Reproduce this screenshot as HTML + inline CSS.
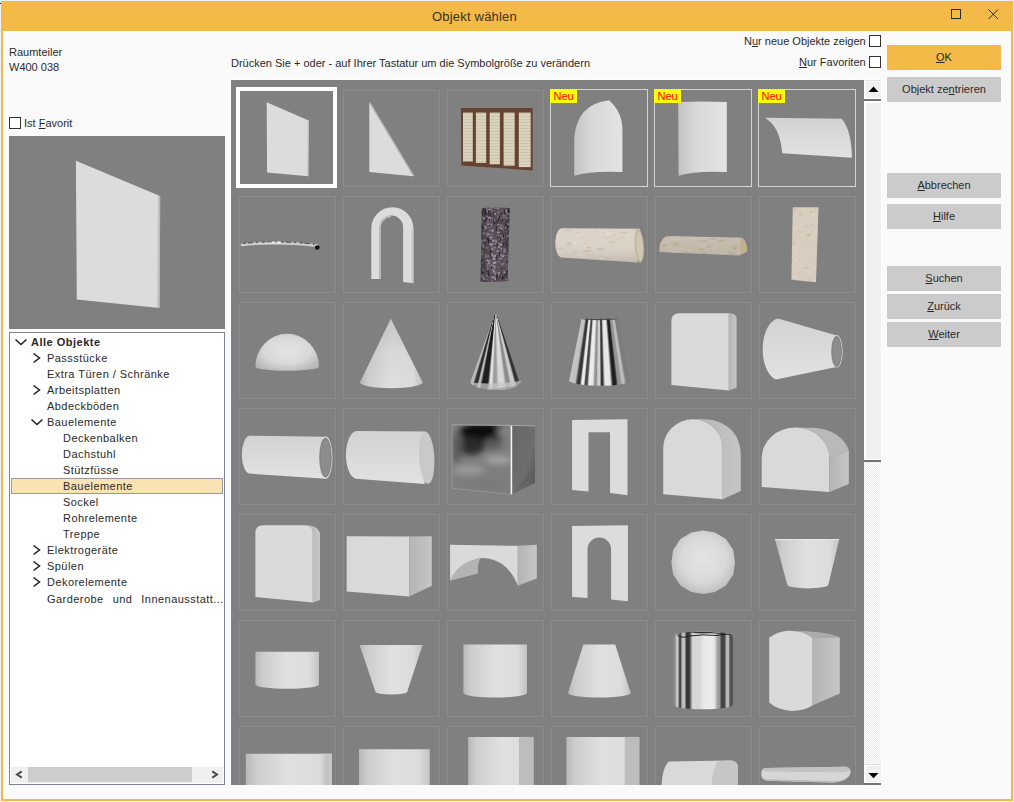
<!DOCTYPE html>
<html><head><meta charset="utf-8">
<style>
html,body{margin:0;padding:0;width:1014px;height:802px;overflow:hidden;background:#eef0f4;}
body{font-family:"Liberation Sans",sans-serif;font-size:11px;color:#2a2a2a;position:relative;}
.a{position:absolute;}
.t{position:absolute;white-space:nowrap;line-height:13px;}
#win{left:1px;top:1px;width:1012px;height:800px;background:#f3ba48;}
#cnt{left:3px;top:31px;width:1008px;height:768px;background:#fafafa;}
.btn{position:absolute;left:887px;width:114px;height:25px;background:#cbcbcb;text-align:center;line-height:25px;white-space:nowrap;}
.u{text-decoration:underline;text-underline-offset:1px;}
.cb{position:absolute;width:10px;height:10px;border:1px solid #333;background:#fff;}
.tr{position:absolute;white-space:nowrap;line-height:13px;letter-spacing:0.45px;}
.chev{position:absolute;}
</style></head><body>
<div id="win" class="a"></div>
<div id="cnt" class="a"></div>
<div id="px03" class="a" style="left:0;top:3px;width:1px;height:1px;background:#1a2030;"></div>
<!-- title bar -->
<div class="t" style="left:432px;top:9px;font-size:13px;line-height:15px;color:#3a3020;letter-spacing:0.2px;">Objekt wählen</div>
<svg class="a" style="left:940px;top:0px" width="70" height="30" viewBox="940 0 70 30">
  <rect x="951.5" y="9.5" width="9" height="9" fill="none" stroke="#2a2a2a" stroke-width="1"/>
  <path d="M988.5,9.5 L998,19 M998,9.5 L988.5,19" stroke="#2a2a2a" stroke-width="1" fill="none"/>
</svg>

<!-- left info -->
<div class="t" style="left:9px;top:46px;">Raumteiler</div>
<div class="t" style="left:9px;top:61px;">W400 038</div>
<div class="cb" style="left:9px;top:117px;"></div>
<div class="t" style="left:24px;top:117px;">Ist <span class="u">F</span>avorit</div>

<!-- preview -->
<div class="a" style="left:9px;top:136px;width:216px;height:193px;background:#808080;"></div>

<!-- tree -->
<div class="a" style="left:9px;top:332px;width:214px;height:451px;border:1px solid #7d8595;background:#fff;"></div>

<!-- treeitems -->
<div class="a" style="left:11px;top:478px;width:210px;height:14px;border:1px solid #999;background:#f9e3b3;"></div>
<div class="tr" style="left:31px;top:336px;font-weight:bold;letter-spacing:0.5px;">Alle Objekte</div>
<div class="tr" style="left:47px;top:352px;">Passstücke</div>
<div class="tr" style="left:47px;top:368px;">Extra Türen / Schränke</div>
<div class="tr" style="left:47px;top:384px;">Arbeitsplatten</div>
<div class="tr" style="left:47px;top:400px;">Abdeckböden</div>
<div class="tr" style="left:47px;top:416px;">Bauelemente</div>
<div class="tr" style="left:63px;top:432px;">Deckenbalken</div>
<div class="tr" style="left:63px;top:448px;">Dachstuhl</div>
<div class="tr" style="left:63px;top:464px;">Stützfüsse</div>
<div class="tr" style="left:63px;top:480px;">Bauelemente</div>
<div class="tr" style="left:63px;top:496px;">Sockel</div>
<div class="tr" style="left:63px;top:512px;">Rohrelemente</div>
<div class="tr" style="left:63px;top:528px;">Treppe</div>
<div class="tr" style="left:47px;top:544px;">Elektrogeräte</div>
<div class="tr" style="left:47px;top:560px;">Spülen</div>
<div class="tr" style="left:47px;top:576px;">Dekorelemente</div>
<div class="tr" style="left:47px;top:593px;word-spacing:5.5px;">Garderobe und Innenausstatt...</div>
<svg class="a" style="left:0;top:330px" width="60" height="280" viewBox="0 330 60 280"><path d="M15.5,339.5 L21,344.5 L26.5,339.5 M33.5,353.5 L39.5,358.0 L33.5,362.5 M33.5,385.5 L39.5,390.0 L33.5,394.5 M31.5,419.5 L37,424.5 L42.5,419.5 M33.5,545.5 L39.5,550.0 L33.5,554.5 M33.5,561.5 L39.5,566.0 L33.5,570.5 M33.5,577.5 L39.5,582.0 L33.5,586.5" fill="none" stroke="#1e1e1e" stroke-width="1.5"/></svg>
<!-- top texts -->
<div class="t" style="left:231px;top:57px;">Drücken Sie + oder - auf Ihrer Tastatur um die Symbolgröße zu verändern</div>
<div class="t" style="left:744px;top:35px;">N<span class="u">u</span>r neue Objekte zeigen</div>
<div class="cb" style="left:869px;top:35px;"></div>
<div class="t" style="left:799px;top:56px;"><span class="u">N</span>ur Favoriten</div>
<div class="cb" style="left:869px;top:56px;"></div>

<!-- buttons -->
<div class="btn" style="top:45px;background:#f3ba48;"><span class="u">O</span>K</div>
<div class="btn" style="top:77px;">Objekt ze<span class="u">n</span>trieren</div>
<div class="btn" style="top:173px;"><span class="u">A</span>bbrechen</div>
<div class="btn" style="top:204px;"><span class="u">H</span>ilfe</div>
<div class="btn" style="top:266px;"><span class="u">S</span>uchen</div>
<div class="btn" style="top:294px;"><span class="u">Z</span>urück</div>
<div class="btn" style="top:322px;"><span class="u">W</span>eiter</div>

<!-- grid -->
<div class="a" style="left:230px;top:79px;width:652px;height:706px;background:#fff;"></div>
<div class="a" style="left:231px;top:80px;width:633px;height:705px;background:#808080;"></div>
<!-- tree hscroll -->
<div class="a" style="left:11px;top:767px;width:212px;height:16px;background:#f0f0f0;"></div>
<div class="a" style="left:28px;top:767px;width:164px;height:15px;background:#cdcdcd;"></div>
<svg class="a" style="left:0;top:760px" width="230" height="30" viewBox="0 760 230 30"><path d="M21.8,771.3 L17,774.5 L21.8,777.7 M212.2,771.3 L217,774.5 L212.2,777.7" fill="none" stroke="#4a4a4a" stroke-width="2"/></svg>
<!-- grid vscroll -->
<div class="a" style="left:864px;top:80px;width:17px;height:705px;background:#fff;"></div>
<div class="a" style="left:865px;top:80px;width:16px;height:1px;background:#e2e2e2;"></div>
<div class="a" style="left:866px;top:82px;width:15px;height:16px;background:#f0f0f0;"></div>
<div class="a" style="left:864px;top:99px;width:17px;height:2px;background:#737373;"></div>
<div class="a" style="left:866px;top:103px;width:15px;height:356px;background:#f0f0f0;"></div>
<div class="a" style="left:864px;top:460px;width:17px;height:2px;background:#737373;"></div>
<div class="a" style="left:864px;top:462px;width:17px;height:302px;background-color:#fff;background-image:repeating-conic-gradient(#ebebeb 0 25%, #ffffff 0 50%);background-size:2px 2px;"></div>
<div class="a" style="left:864px;top:764px;width:17px;height:1px;background:#e2e2e2;"></div>
<div class="a" style="left:866px;top:766px;width:15px;height:16px;background:#f0f0f0;"></div>
<div class="a" style="left:864px;top:783px;width:17px;height:2px;background:#737373;"></div>
<svg class="a" style="left:860px;top:76px" width="26" height="714" viewBox="860 76 26 714"><path d="M873.5,86.5 L878.5,92 L868.5,92 Z M868.5,773 L878.5,773 L873.5,778.3 Z" fill="#000"/></svg>
<!-- GRIDSVG -->
<svg class="a" style="left:231px;top:80px" width="633" height="705" viewBox="231 80 633 705"><defs>
<linearGradient id="gH" x1="0" x2="1" y1="0" y2="0">
 <stop offset="0" stop-color="#b9b9b9"/><stop offset="0.12" stop-color="#cdcdcd"/><stop offset="0.5" stop-color="#e0e0e0"/><stop offset="0.85" stop-color="#dcdcdc"/><stop offset="1" stop-color="#c2c2c2"/>
</linearGradient>
<linearGradient id="gPanel" x1="0" x2="1" y1="0" y2="0">
 <stop offset="0" stop-color="#c2c2c2"/><stop offset="0.35" stop-color="#d8d8d8"/><stop offset="1" stop-color="#e3e3e3"/>
</linearGradient>
<linearGradient id="gPanelV" x1="0" x2="0" y1="0" y2="1">
 <stop offset="0" stop-color="#d2d2d2"/><stop offset="1" stop-color="#e2e2e2"/>
</linearGradient>
<radialGradient id="gSph" cx="0.5" cy="0.45" r="0.6">
 <stop offset="0" stop-color="#e4e4e4"/><stop offset="0.6" stop-color="#d9d9d9"/><stop offset="1" stop-color="#b8b8b8"/>
</radialGradient>
<linearGradient id="gSide" x1="0" x2="1" y1="0" y2="0">
 <stop offset="0" stop-color="#b4b4b4"/><stop offset="1" stop-color="#c6c6c6"/>
</linearGradient>
<linearGradient id="gChrome" x1="0" x2="1" y1="0" y2="0">
 <stop offset="0" stop-color="#9a9a9a"/><stop offset="0.06" stop-color="#e8e8e8"/><stop offset="0.12" stop-color="#505050"/><stop offset="0.17" stop-color="#1a1a1a"/><stop offset="0.24" stop-color="#d0d0d0"/><stop offset="0.32" stop-color="#ffffff"/><stop offset="0.4" stop-color="#9a9a9a"/><stop offset="0.46" stop-color="#f4f4f4"/><stop offset="0.55" stop-color="#c8c8c8"/><stop offset="0.62" stop-color="#ffffff"/><stop offset="0.7" stop-color="#707070"/><stop offset="0.78" stop-color="#1e1e1e"/><stop offset="0.86" stop-color="#bdbdbd"/><stop offset="0.93" stop-color="#303030"/><stop offset="1" stop-color="#8a8a8a"/>
</linearGradient>
<linearGradient id="gChrome2" x1="0" x2="1" y1="0" y2="0">
 <stop offset="0" stop-color="#a0a0a0"/><stop offset="0.05" stop-color="#f0f0f0"/><stop offset="0.1" stop-color="#3a3a3a"/><stop offset="0.16" stop-color="#d8d8d8"/><stop offset="0.22" stop-color="#7a7a7a"/><stop offset="0.3" stop-color="#ffffff"/><stop offset="0.38" stop-color="#c0c0c0"/><stop offset="0.45" stop-color="#ffffff"/><stop offset="0.55" stop-color="#f0f0f0"/><stop offset="0.62" stop-color="#6a6a6a"/><stop offset="0.7" stop-color="#e6e6e6"/><stop offset="0.76" stop-color="#2a2a2a"/><stop offset="0.84" stop-color="#cfcfcf"/><stop offset="0.92" stop-color="#404040"/><stop offset="1" stop-color="#9a9a9a"/>
</linearGradient>
<linearGradient id="gCube" x1="0" x2="0.3" y1="0" y2="1">
 <stop offset="0" stop-color="#505050"/><stop offset="0.35" stop-color="#5a5a5a"/><stop offset="0.6" stop-color="#8a8a8a"/><stop offset="1" stop-color="#9a9a9a"/>
</linearGradient>
<linearGradient id="gWood" x1="0" x2="0" y1="0" y2="1">
 <stop offset="0" stop-color="#d8ccb6"/><stop offset="1" stop-color="#c9bba4"/>
</linearGradient>
<pattern id="pWeave" width="4" height="3" patternUnits="userSpaceOnUse"><rect width="4" height="3" fill="#d9d2bf"/><rect y="2" width="4" height="1" fill="#cdc4ae"/></pattern>
<pattern id="pBark" width="8" height="8" patternUnits="userSpaceOnUse"><rect width="8" height="8" fill="#4a3f47"/><path d="M1,0 L2,4 L1,8 M5,1 L6,5 L5,7" stroke="#8a7f8a" stroke-width="1.1" fill="none"/><rect x="3" y="2" width="1" height="2" fill="#9c93a0"/></pattern>
<radialGradient id="gCubeR" cx="0.45" cy="0.12" r="0.55"><stop offset="0" stop-color="#000" stop-opacity="0.85"/><stop offset="0.6" stop-color="#000" stop-opacity="0.35"/><stop offset="1" stop-color="#000" stop-opacity="0"/></radialGradient>
<linearGradient id="gCubeS" x1="0" x2="1" y1="0" y2="1"><stop offset="0" stop-color="#666666"/><stop offset="0.6" stop-color="#6e6e6e"/><stop offset="1" stop-color="#555555"/></linearGradient>
<linearGradient id="gBarkShade" x1="0" x2="1" y1="0" y2="0"><stop offset="0" stop-color="#000" stop-opacity="0.45"/><stop offset="0.35" stop-color="#000" stop-opacity="0"/><stop offset="0.7" stop-color="#000" stop-opacity="0"/><stop offset="1" stop-color="#000" stop-opacity="0.45"/></linearGradient>
<linearGradient id="gLogShade" x1="0" x2="0" y1="0" y2="1"><stop offset="0" stop-color="#fff" stop-opacity="0.1"/><stop offset="0.5" stop-color="#fff" stop-opacity="0.05"/><stop offset="1" stop-color="#000" stop-opacity="0.18"/></linearGradient>
<linearGradient id="gHlShade" x1="0" x2="0" y1="0" y2="1"><stop offset="0" stop-color="#000" stop-opacity="0.05"/><stop offset="1" stop-color="#000" stop-opacity="0.12"/></linearGradient>
<filter id="fBlur" x="-10%" y="-10%" width="120%" height="120%"><feGaussianBlur stdDeviation="0.55"/></filter>
<filter id="fTex" x="-5%" y="-5%" width="110%" height="110%"><feGaussianBlur stdDeviation="0.6"/></filter>
<filter id="fCube" x="-30%" y="-30%" width="160%" height="160%"><feGaussianBlur stdDeviation="3"/></filter>
<filter id="fTex2" x="-5%" y="-5%" width="110%" height="110%"><feGaussianBlur stdDeviation="0.35"/></filter>
<linearGradient id="gConeV" x1="0" x2="0" y1="0" y2="1"><stop offset="0" stop-color="#000" stop-opacity="0.12"/><stop offset="0.5" stop-color="#000" stop-opacity="0.03"/><stop offset="1" stop-color="#000" stop-opacity="0"/></linearGradient>
<linearGradient id="gSideR" x1="0" x2="1" y1="0" y2="0"><stop offset="0" stop-color="#d8d8d8"/><stop offset="0.5" stop-color="#c2c2c2"/><stop offset="1" stop-color="#c8c8c8"/></linearGradient>
</defs><rect x="343.5" y="90.5" width="96" height="96" fill="none" stroke="#8b8b8b" stroke-width="1"/><rect x="447.5" y="90.5" width="96" height="96" fill="none" stroke="#8b8b8b" stroke-width="1"/><rect x="550.5" y="89.5" width="97" height="97" fill="none" stroke="#d2d2d2" stroke-width="1"/><rect x="654.5" y="89.5" width="97" height="97" fill="none" stroke="#d2d2d2" stroke-width="1"/><rect x="758.5" y="89.5" width="97" height="97" fill="none" stroke="#d2d2d2" stroke-width="1"/><rect x="239.5" y="196.5" width="96" height="96" fill="none" stroke="#8b8b8b" stroke-width="1"/><rect x="343.5" y="196.5" width="96" height="96" fill="none" stroke="#8b8b8b" stroke-width="1"/><rect x="447.5" y="196.5" width="96" height="96" fill="none" stroke="#8b8b8b" stroke-width="1"/><rect x="551.5" y="196.5" width="96" height="96" fill="none" stroke="#8b8b8b" stroke-width="1"/><rect x="655.5" y="196.5" width="96" height="96" fill="none" stroke="#8b8b8b" stroke-width="1"/><rect x="759.5" y="196.5" width="96" height="96" fill="none" stroke="#8b8b8b" stroke-width="1"/><rect x="239.5" y="302.5" width="96" height="96" fill="none" stroke="#8b8b8b" stroke-width="1"/><rect x="343.5" y="302.5" width="96" height="96" fill="none" stroke="#8b8b8b" stroke-width="1"/><rect x="447.5" y="302.5" width="96" height="96" fill="none" stroke="#8b8b8b" stroke-width="1"/><rect x="551.5" y="302.5" width="96" height="96" fill="none" stroke="#8b8b8b" stroke-width="1"/><rect x="655.5" y="302.5" width="96" height="96" fill="none" stroke="#8b8b8b" stroke-width="1"/><rect x="759.5" y="302.5" width="96" height="96" fill="none" stroke="#8b8b8b" stroke-width="1"/><rect x="239.5" y="408.5" width="96" height="96" fill="none" stroke="#8b8b8b" stroke-width="1"/><rect x="343.5" y="408.5" width="96" height="96" fill="none" stroke="#8b8b8b" stroke-width="1"/><rect x="447.5" y="408.5" width="96" height="96" fill="none" stroke="#8b8b8b" stroke-width="1"/><rect x="551.5" y="408.5" width="96" height="96" fill="none" stroke="#8b8b8b" stroke-width="1"/><rect x="655.5" y="408.5" width="96" height="96" fill="none" stroke="#8b8b8b" stroke-width="1"/><rect x="759.5" y="408.5" width="96" height="96" fill="none" stroke="#8b8b8b" stroke-width="1"/><rect x="239.5" y="514.5" width="96" height="96" fill="none" stroke="#8b8b8b" stroke-width="1"/><rect x="343.5" y="514.5" width="96" height="96" fill="none" stroke="#8b8b8b" stroke-width="1"/><rect x="447.5" y="514.5" width="96" height="96" fill="none" stroke="#8b8b8b" stroke-width="1"/><rect x="551.5" y="514.5" width="96" height="96" fill="none" stroke="#8b8b8b" stroke-width="1"/><rect x="655.5" y="514.5" width="96" height="96" fill="none" stroke="#8b8b8b" stroke-width="1"/><rect x="759.5" y="514.5" width="96" height="96" fill="none" stroke="#8b8b8b" stroke-width="1"/><rect x="239.5" y="620.5" width="96" height="96" fill="none" stroke="#8b8b8b" stroke-width="1"/><rect x="343.5" y="620.5" width="96" height="96" fill="none" stroke="#8b8b8b" stroke-width="1"/><rect x="447.5" y="620.5" width="96" height="96" fill="none" stroke="#8b8b8b" stroke-width="1"/><rect x="551.5" y="620.5" width="96" height="96" fill="none" stroke="#8b8b8b" stroke-width="1"/><rect x="655.5" y="620.5" width="96" height="96" fill="none" stroke="#8b8b8b" stroke-width="1"/><rect x="759.5" y="620.5" width="96" height="96" fill="none" stroke="#8b8b8b" stroke-width="1"/><rect x="239.5" y="726.5" width="96" height="96" fill="none" stroke="#8b8b8b" stroke-width="1"/><rect x="343.5" y="726.5" width="96" height="96" fill="none" stroke="#8b8b8b" stroke-width="1"/><rect x="447.5" y="726.5" width="96" height="96" fill="none" stroke="#8b8b8b" stroke-width="1"/><rect x="551.5" y="726.5" width="96" height="96" fill="none" stroke="#8b8b8b" stroke-width="1"/><rect x="655.5" y="726.5" width="96" height="96" fill="none" stroke="#8b8b8b" stroke-width="1"/><rect x="759.5" y="726.5" width="96" height="96" fill="none" stroke="#8b8b8b" stroke-width="1"/><g transform="translate(239,90)"><path d="M27.7,12.3 L69.7,30.4 L69.3,86.2 L28.1,82.5 Z" fill="#dcdcdc"/><path d="M68.6,30.2 L69.7,30.4 L69.3,86.2 L68.3,86.1 Z" fill="#c4c4c4"/></g><g transform="translate(343,90)"><path d="M26.3,12.7 L70.4,86.2 L26.3,82 Z" fill="#dcdcdc"/><path d="M26.3,12.7 L27.3,12.2 L71.4,86 L70.4,86.2 Z" fill="#bdbdbd"/></g><g transform="translate(447,90)"><path d="M13.9,18 L85.7,18 L85.7,80.4 L14.4,75.5 Z" fill="#654330"/><rect x="16" y="22.6" width="9.8" height="48.9" fill="url(#pWeave)"/><rect x="28.9" y="22.6" width="10.3" height="50.3" fill="url(#pWeave)"/><rect x="42.7" y="22.6" width="10.2" height="51.7" fill="url(#pWeave)"/><rect x="56.6" y="22.6" width="11.1" height="53.1" fill="url(#pWeave)"/><rect x="71.8" y="22.6" width="11.9" height="54.5" fill="url(#pWeave)"/></g><g transform="translate(551,90)"><path d="M23.2,85.7 L23.2,48 Q26,14 58,10.3 Q71.4,22 71.4,40 L71.4,82 Q40,80.5 23.2,85.7 Z" fill="url(#gPanel)"/></g><g transform="translate(655,90)"><path d="M23.2,11.9 Q48,11 71.8,11.9 L71.8,82 Q40,80.5 23.6,85.7 Z" fill="url(#gPanel)"/></g><g transform="translate(759,90)"><path d="M5.7,27.7 L82.7,28.7 Q92.5,40 92.9,67.7 L23.2,63.2 Q21,36 5.7,27.7 Z" fill="url(#gPanelV)"/></g><g transform="translate(239,196)"><path d="M3.1,48.8 Q35,45 77.5,49.5" stroke="#cdcdcd" stroke-width="2.8" fill="none" stroke-linecap="round"/><path d="M28,46.8 Q35,46.2 42,46.4" stroke="#f4f4f4" stroke-width="1.6" fill="none"/><path d="M4,47.6 Q35,43.9 76,48.3" stroke="#3c3c3c" stroke-width="0.9" fill="none" stroke-dasharray="3 2 5 3 2 4"/><path d="M76,50 L80.5,50.5 L80,53 L77,53.5 Z" fill="#111"/><circle cx="78.3" cy="51.4" r="2.2" fill="#111"/></g><g transform="translate(343,196)"><path d="M28.3,83 L28.3,32.3 A21,21 0 0 1 70.4,32.3 L70.4,87.2 L60.1,86 L60.1,31.3 A11.8,11.8 0 0 0 36.5,31.3 L36.5,83 Z" fill="#dcdcdc"/><path d="M36.5,83 L36.5,31.3 A11.8,11.8 0 0 1 48,19.5 L48,21 A10.5,10.5 0 0 0 37.8,31.5 L37.8,83 Z" fill="#c4c4c4"/><path d="M70.4,32.3 L70.4,87.2 L68.5,87 L68.5,33 Z" fill="#c8c8c8"/></g><g transform="translate(447,196)"><clipPath id="cpBark"><path d="M34.8,12.2 Q48.8,10.3 62.8,12.2 L60.6,85 Q47,86.8 33.6,85.5 Z"/></clipPath><g clip-path="url(#cpBark)"><rect x="30" y="8" width="36" height="82" fill="#5a4f58"/><g filter="url(#fTex2)"><ellipse cx="42.0" cy="21.8" rx="1.25" ry="0.56" fill="#6e646e"/><ellipse cx="34.9" cy="55.5" rx="1.51" ry="0.67" fill="#8d8290"/><ellipse cx="45.4" cy="15.4" rx="0.69" ry="0.84" fill="#6e646e"/><ellipse cx="35.8" cy="27.4" rx="1.23" ry="1.26" fill="#6e646e"/><ellipse cx="50.2" cy="13.9" rx="0.82" ry="0.95" fill="#9a90a0"/><ellipse cx="41.0" cy="21.3" rx="0.72" ry="0.75" fill="#9a90a0"/><ellipse cx="35.2" cy="54.6" rx="0.79" ry="0.58" fill="#8d8290"/><ellipse cx="49.5" cy="58.3" rx="1.10" ry="0.93" fill="#7e7480"/><ellipse cx="46.4" cy="82.0" rx="0.96" ry="0.70" fill="#9a90a0"/><ellipse cx="53.7" cy="29.0" rx="1.17" ry="0.92" fill="#7e7480"/><ellipse cx="54.6" cy="32.5" rx="1.58" ry="0.59" fill="#a59cab"/><ellipse cx="37.1" cy="36.7" rx="1.53" ry="0.84" fill="#8d8290"/><ellipse cx="55.7" cy="54.7" rx="1.48" ry="0.75" fill="#7e7480"/><ellipse cx="50.4" cy="55.2" rx="1.06" ry="1.17" fill="#7e7480"/><ellipse cx="46.7" cy="61.8" rx="0.66" ry="1.06" fill="#6e646e"/><ellipse cx="62.8" cy="74.1" rx="0.88" ry="0.81" fill="#7e7480"/><ellipse cx="32.7" cy="46.0" rx="0.77" ry="0.59" fill="#8d8290"/><ellipse cx="38.8" cy="32.4" rx="1.34" ry="0.82" fill="#a59cab"/><ellipse cx="34.5" cy="45.0" rx="1.15" ry="1.21" fill="#a59cab"/><ellipse cx="58.8" cy="31.7" rx="1.02" ry="0.79" fill="#a59cab"/><ellipse cx="61.7" cy="21.8" rx="0.78" ry="0.69" fill="#9a90a0"/><ellipse cx="32.4" cy="74.8" rx="0.78" ry="0.73" fill="#9a90a0"/><ellipse cx="45.0" cy="38.8" rx="1.17" ry="1.26" fill="#6e646e"/><ellipse cx="61.5" cy="61.1" rx="1.34" ry="0.87" fill="#6e646e"/><ellipse cx="44.2" cy="41.1" rx="0.70" ry="1.01" fill="#8d8290"/><ellipse cx="37.9" cy="86.8" rx="1.04" ry="0.59" fill="#6e646e"/><ellipse cx="33.6" cy="10.0" rx="0.75" ry="0.58" fill="#7e7480"/><ellipse cx="51.0" cy="15.5" rx="0.81" ry="0.80" fill="#7e7480"/><ellipse cx="61.6" cy="57.0" rx="1.07" ry="0.59" fill="#a59cab"/><ellipse cx="62.8" cy="46.3" rx="1.08" ry="0.57" fill="#8d8290"/><ellipse cx="55.2" cy="67.7" rx="1.08" ry="1.05" fill="#6e646e"/><ellipse cx="32.7" cy="84.2" rx="1.13" ry="0.62" fill="#6e646e"/><ellipse cx="60.3" cy="69.1" rx="0.90" ry="1.01" fill="#8d8290"/><ellipse cx="53.6" cy="30.4" rx="0.97" ry="0.63" fill="#9a90a0"/><ellipse cx="48.5" cy="70.8" rx="0.93" ry="0.68" fill="#9a90a0"/><ellipse cx="57.0" cy="73.8" rx="1.34" ry="0.68" fill="#6e646e"/><ellipse cx="47.3" cy="67.0" rx="1.59" ry="1.13" fill="#a59cab"/><ellipse cx="40.0" cy="64.0" rx="1.56" ry="0.86" fill="#7e7480"/><ellipse cx="61.6" cy="38.4" rx="0.82" ry="0.68" fill="#9a90a0"/><ellipse cx="42.5" cy="47.6" rx="1.59" ry="0.99" fill="#8d8290"/><ellipse cx="46.9" cy="60.9" rx="1.40" ry="0.57" fill="#8d8290"/><ellipse cx="60.2" cy="71.0" rx="1.35" ry="0.88" fill="#9a90a0"/><ellipse cx="45.5" cy="59.6" rx="0.69" ry="1.26" fill="#a59cab"/><ellipse cx="46.4" cy="68.0" rx="0.68" ry="0.63" fill="#9a90a0"/><ellipse cx="32.9" cy="56.1" rx="1.07" ry="1.02" fill="#6e646e"/><ellipse cx="57.6" cy="86.5" rx="1.26" ry="0.78" fill="#6e646e"/><ellipse cx="49.0" cy="11.7" rx="1.40" ry="1.08" fill="#8d8290"/><ellipse cx="48.3" cy="82.8" rx="1.03" ry="1.20" fill="#9a90a0"/><ellipse cx="32.9" cy="26.6" rx="1.10" ry="1.11" fill="#7e7480"/><ellipse cx="40.0" cy="42.7" rx="0.73" ry="1.23" fill="#7e7480"/><ellipse cx="59.8" cy="61.7" rx="1.42" ry="0.91" fill="#6e646e"/><ellipse cx="36.1" cy="21.8" rx="1.11" ry="1.20" fill="#9a90a0"/><ellipse cx="50.9" cy="70.5" rx="0.75" ry="0.61" fill="#6e646e"/><ellipse cx="54.5" cy="53.4" rx="0.93" ry="0.91" fill="#6e646e"/><ellipse cx="47.0" cy="70.6" rx="1.48" ry="0.55" fill="#9a90a0"/><ellipse cx="40.6" cy="70.2" rx="1.11" ry="0.95" fill="#8d8290"/><ellipse cx="45.7" cy="57.8" rx="1.11" ry="0.91" fill="#7e7480"/><ellipse cx="46.0" cy="51.6" rx="1.08" ry="1.25" fill="#6e646e"/><ellipse cx="59.2" cy="83.5" rx="0.86" ry="0.95" fill="#9a90a0"/><ellipse cx="58.0" cy="20.7" rx="0.72" ry="0.85" fill="#8d8290"/><ellipse cx="52.8" cy="43.4" rx="0.81" ry="0.74" fill="#8d8290"/><ellipse cx="59.8" cy="22.0" rx="1.32" ry="1.03" fill="#9a90a0"/><ellipse cx="39.8" cy="20.7" rx="1.07" ry="1.10" fill="#8d8290"/><ellipse cx="44.3" cy="48.0" rx="1.59" ry="1.17" fill="#9a90a0"/><ellipse cx="53.9" cy="87.5" rx="1.00" ry="0.84" fill="#7e7480"/><ellipse cx="41.9" cy="66.3" rx="0.62" ry="0.94" fill="#a59cab"/><ellipse cx="53.8" cy="40.0" rx="1.12" ry="0.74" fill="#8d8290"/><ellipse cx="35.5" cy="81.6" rx="0.83" ry="1.20" fill="#8d8290"/><ellipse cx="40.2" cy="13.1" rx="1.38" ry="0.72" fill="#9a90a0"/><ellipse cx="57.4" cy="76.3" rx="1.28" ry="1.26" fill="#a59cab"/><ellipse cx="36.6" cy="81.7" rx="1.17" ry="1.06" fill="#8d8290"/><ellipse cx="40.7" cy="72.4" rx="0.78" ry="1.22" fill="#7e7480"/><ellipse cx="61.1" cy="59.5" rx="1.40" ry="0.57" fill="#9a90a0"/><ellipse cx="34.1" cy="77.3" rx="1.05" ry="0.77" fill="#6e646e"/><ellipse cx="45.0" cy="81.4" rx="1.22" ry="0.53" fill="#9a90a0"/><ellipse cx="61.1" cy="85.6" rx="0.86" ry="0.64" fill="#7e7480"/><ellipse cx="51.5" cy="51.4" rx="0.81" ry="0.86" fill="#9a90a0"/><ellipse cx="40.4" cy="72.7" rx="1.59" ry="0.53" fill="#8d8290"/><ellipse cx="54.7" cy="53.0" rx="0.79" ry="0.88" fill="#a59cab"/><ellipse cx="35.3" cy="73.9" rx="1.03" ry="0.90" fill="#a59cab"/><ellipse cx="62.1" cy="34.0" rx="0.82" ry="0.68" fill="#9a90a0"/><ellipse cx="57.8" cy="65.1" rx="1.24" ry="0.82" fill="#7e7480"/><ellipse cx="62.4" cy="75.3" rx="0.61" ry="1.00" fill="#7e7480"/><ellipse cx="45.4" cy="14.3" rx="1.27" ry="0.80" fill="#6e646e"/><ellipse cx="52.8" cy="32.0" rx="0.84" ry="0.73" fill="#a59cab"/><ellipse cx="37.7" cy="31.0" rx="0.60" ry="0.79" fill="#7e7480"/><ellipse cx="62.2" cy="52.7" rx="0.84" ry="1.27" fill="#7e7480"/><ellipse cx="38.8" cy="24.3" rx="0.94" ry="0.57" fill="#7e7480"/><ellipse cx="47.6" cy="25.7" rx="1.10" ry="0.50" fill="#7e7480"/><ellipse cx="57.3" cy="21.2" rx="1.19" ry="0.82" fill="#7e7480"/><ellipse cx="41.4" cy="28.2" rx="1.19" ry="0.92" fill="#9a90a0"/><ellipse cx="52.4" cy="65.8" rx="1.48" ry="0.81" fill="#7e7480"/><ellipse cx="54.3" cy="48.5" rx="0.88" ry="0.99" fill="#9a90a0"/><ellipse cx="33.4" cy="75.2" rx="1.49" ry="1.00" fill="#6e646e"/><ellipse cx="36.3" cy="50.9" rx="1.10" ry="1.17" fill="#8d8290"/><ellipse cx="57.6" cy="55.6" rx="1.49" ry="1.05" fill="#9a90a0"/><ellipse cx="34.6" cy="13.3" rx="1.24" ry="1.27" fill="#a59cab"/><ellipse cx="57.9" cy="53.6" rx="1.23" ry="1.00" fill="#9a90a0"/><ellipse cx="47.2" cy="10.3" rx="1.40" ry="1.10" fill="#6e646e"/><ellipse cx="59.8" cy="17.2" rx="1.13" ry="1.10" fill="#a59cab"/><ellipse cx="39.8" cy="15.8" rx="0.87" ry="1.08" fill="#9a90a0"/><ellipse cx="39.2" cy="60.7" rx="1.06" ry="1.18" fill="#8d8290"/><ellipse cx="46.8" cy="63.3" rx="1.37" ry="0.99" fill="#9a90a0"/><ellipse cx="34.4" cy="21.5" rx="0.85" ry="1.09" fill="#7e7480"/><ellipse cx="51.3" cy="20.4" rx="1.08" ry="0.89" fill="#8d8290"/><ellipse cx="53.5" cy="62.7" rx="0.89" ry="0.91" fill="#a59cab"/><ellipse cx="46.4" cy="69.8" rx="1.59" ry="0.94" fill="#7e7480"/><ellipse cx="62.3" cy="83.0" rx="0.62" ry="0.87" fill="#6e646e"/><ellipse cx="62.0" cy="45.1" rx="0.87" ry="0.67" fill="#9a90a0"/><ellipse cx="34.3" cy="17.0" rx="1.35" ry="0.71" fill="#7e7480"/><ellipse cx="36.1" cy="74.0" rx="1.11" ry="1.21" fill="#7e7480"/><ellipse cx="39.2" cy="80.0" rx="1.09" ry="0.52" fill="#8d8290"/><ellipse cx="61.4" cy="63.2" rx="1.01" ry="1.08" fill="#a59cab"/><ellipse cx="42.7" cy="34.7" rx="1.44" ry="0.50" fill="#7e7480"/><ellipse cx="58.0" cy="19.4" rx="1.53" ry="1.07" fill="#7e7480"/><ellipse cx="39.8" cy="15.1" rx="0.99" ry="1.20" fill="#8d8290"/><ellipse cx="43.2" cy="43.4" rx="0.88" ry="0.54" fill="#8d8290"/><ellipse cx="33.6" cy="61.6" rx="1.23" ry="0.62" fill="#7e7480"/><ellipse cx="45.5" cy="34.6" rx="1.37" ry="1.13" fill="#a59cab"/><ellipse cx="59.4" cy="73.3" rx="1.23" ry="1.23" fill="#6e646e"/><ellipse cx="49.0" cy="66.1" rx="0.65" ry="1.09" fill="#a59cab"/><ellipse cx="51.1" cy="20.8" rx="1.47" ry="0.89" fill="#6e646e"/><ellipse cx="35.9" cy="46.8" rx="0.94" ry="0.74" fill="#7e7480"/><ellipse cx="44.6" cy="28.6" rx="1.08" ry="1.04" fill="#8d8290"/><ellipse cx="37.2" cy="22.6" rx="0.81" ry="1.22" fill="#a59cab"/><ellipse cx="49.1" cy="45.3" rx="0.93" ry="1.11" fill="#a59cab"/><ellipse cx="36.3" cy="25.0" rx="0.69" ry="0.77" fill="#8d8290"/><ellipse cx="41.9" cy="38.7" rx="1.41" ry="0.66" fill="#8d8290"/><ellipse cx="55.2" cy="42.2" rx="1.01" ry="0.92" fill="#a59cab"/><ellipse cx="40.4" cy="68.7" rx="1.10" ry="0.96" fill="#7e7480"/><ellipse cx="35.9" cy="49.3" rx="1.23" ry="1.19" fill="#9a90a0"/><ellipse cx="34.9" cy="79.9" rx="0.98" ry="1.02" fill="#a59cab"/><ellipse cx="61.6" cy="76.2" rx="1.47" ry="0.52" fill="#8d8290"/><ellipse cx="45.2" cy="69.6" rx="1.40" ry="1.27" fill="#a59cab"/><ellipse cx="32.0" cy="40.5" rx="1.53" ry="1.16" fill="#a59cab"/><ellipse cx="62.1" cy="29.4" rx="0.71" ry="0.62" fill="#6e646e"/><ellipse cx="62.1" cy="18.5" rx="1.43" ry="1.06" fill="#a59cab"/><ellipse cx="34.6" cy="70.6" rx="0.60" ry="0.60" fill="#6e646e"/><ellipse cx="60.5" cy="60.3" rx="0.90" ry="0.60" fill="#7e7480"/><ellipse cx="48.4" cy="44.1" rx="1.36" ry="0.58" fill="#7e7480"/><ellipse cx="48.3" cy="55.5" rx="0.99" ry="0.68" fill="#6e646e"/><ellipse cx="32.0" cy="51.9" rx="1.60" ry="0.72" fill="#7e7480"/><ellipse cx="52.0" cy="78.9" rx="1.08" ry="0.69" fill="#9a90a0"/><ellipse cx="32.9" cy="42.1" rx="1.25" ry="0.54" fill="#9a90a0"/><ellipse cx="47.4" cy="62.6" rx="1.02" ry="0.71" fill="#a59cab"/><ellipse cx="60.7" cy="27.7" rx="0.63" ry="0.77" fill="#a59cab"/><ellipse cx="43.2" cy="40.9" rx="0.61" ry="0.73" fill="#6e646e"/><ellipse cx="34.1" cy="48.7" rx="0.80" ry="1.11" fill="#9a90a0"/><ellipse cx="39.2" cy="27.3" rx="1.36" ry="0.74" fill="#6e646e"/><ellipse cx="47.4" cy="24.6" rx="0.82" ry="0.83" fill="#8d8290"/><ellipse cx="61.4" cy="21.4" rx="0.99" ry="0.67" fill="#6e646e"/><ellipse cx="36.4" cy="14.0" rx="0.66" ry="0.81" fill="#7e7480"/><ellipse cx="54.7" cy="87.8" rx="1.53" ry="0.76" fill="#9a90a0"/><ellipse cx="52.2" cy="50.9" rx="1.07" ry="0.75" fill="#a59cab"/><ellipse cx="58.0" cy="86.8" rx="1.04" ry="0.59" fill="#8d8290"/><ellipse cx="40.7" cy="37.4" rx="1.56" ry="0.60" fill="#9a90a0"/><ellipse cx="43.8" cy="70.0" rx="0.91" ry="1.14" fill="#8d8290"/><ellipse cx="33.5" cy="46.9" rx="0.97" ry="1.24" fill="#9a90a0"/><ellipse cx="42.0" cy="67.5" rx="1.07" ry="1.01" fill="#9a90a0"/><ellipse cx="57.2" cy="69.8" rx="0.64" ry="0.53" fill="#8d8290"/><ellipse cx="56.9" cy="14.8" rx="0.79" ry="0.55" fill="#6e646e"/><ellipse cx="42.5" cy="31.2" rx="1.56" ry="0.99" fill="#7e7480"/><ellipse cx="55.1" cy="63.8" rx="1.52" ry="0.74" fill="#6e646e"/><ellipse cx="60.4" cy="59.5" rx="1.54" ry="0.52" fill="#9a90a0"/><ellipse cx="35.3" cy="65.8" rx="1.07" ry="1.12" fill="#7e7480"/><ellipse cx="60.3" cy="73.6" rx="0.73" ry="0.90" fill="#8d8290"/><ellipse cx="56.9" cy="67.6" rx="1.42" ry="1.12" fill="#6e646e"/><ellipse cx="39.3" cy="77.2" rx="1.06" ry="1.13" fill="#6e646e"/><ellipse cx="34.4" cy="25.4" rx="1.35" ry="0.70" fill="#8d8290"/><ellipse cx="52.1" cy="47.6" rx="1.14" ry="0.63" fill="#a59cab"/><ellipse cx="59.4" cy="87.1" rx="0.86" ry="0.57" fill="#8d8290"/><ellipse cx="45.1" cy="87.1" rx="1.57" ry="0.64" fill="#9a90a0"/><ellipse cx="44.9" cy="58.4" rx="1.27" ry="1.10" fill="#8d8290"/><ellipse cx="56.2" cy="32.9" rx="0.88" ry="0.71" fill="#7e7480"/><ellipse cx="54.9" cy="25.5" rx="0.85" ry="0.70" fill="#9a90a0"/><ellipse cx="40.7" cy="80.8" rx="0.79" ry="0.55" fill="#7e7480"/><ellipse cx="62.8" cy="49.6" rx="0.83" ry="1.15" fill="#a59cab"/><ellipse cx="62.7" cy="18.0" rx="1.07" ry="1.16" fill="#a59cab"/><ellipse cx="60.3" cy="13.1" rx="0.89" ry="0.60" fill="#9a90a0"/><ellipse cx="50.6" cy="74.6" rx="0.79" ry="0.56" fill="#6e646e"/><ellipse cx="58.8" cy="45.0" rx="0.86" ry="1.12" fill="#8d8290"/><ellipse cx="35.3" cy="56.5" rx="1.22" ry="0.67" fill="#7e7480"/><ellipse cx="42.5" cy="13.4" rx="1.60" ry="0.53" fill="#9a90a0"/><ellipse cx="57.3" cy="73.9" rx="1.01" ry="0.80" fill="#6e646e"/><ellipse cx="41.7" cy="25.9" rx="1.40" ry="0.94" fill="#8d8290"/><ellipse cx="44.7" cy="72.1" rx="1.26" ry="0.62" fill="#6e646e"/><ellipse cx="34.8" cy="22.8" rx="1.30" ry="0.83" fill="#7e7480"/><ellipse cx="52.7" cy="42.6" rx="0.65" ry="1.10" fill="#7e7480"/><ellipse cx="44.8" cy="11.4" rx="1.37" ry="1.14" fill="#9a90a0"/><ellipse cx="44.1" cy="41.6" rx="1.54" ry="0.85" fill="#9a90a0"/><ellipse cx="45.1" cy="74.0" rx="1.01" ry="1.21" fill="#a59cab"/><ellipse cx="56.0" cy="20.1" rx="0.65" ry="0.61" fill="#a59cab"/><ellipse cx="34.8" cy="58.5" rx="0.97" ry="0.90" fill="#9a90a0"/><ellipse cx="42.8" cy="22.6" rx="0.77" ry="0.55" fill="#a59cab"/><ellipse cx="47.2" cy="72.8" rx="1.57" ry="0.66" fill="#9a90a0"/><ellipse cx="58.0" cy="13.4" rx="1.51" ry="0.75" fill="#6e646e"/><ellipse cx="60.7" cy="40.3" rx="1.50" ry="1.00" fill="#9a90a0"/><ellipse cx="51.9" cy="76.8" rx="1.22" ry="0.99" fill="#9a90a0"/><ellipse cx="57.7" cy="24.3" rx="0.82" ry="0.82" fill="#6e646e"/><ellipse cx="36.9" cy="38.0" rx="0.75" ry="1.28" fill="#9a90a0"/><ellipse cx="33.3" cy="53.9" rx="1.36" ry="0.53" fill="#7e7480"/><ellipse cx="35.6" cy="56.8" rx="1.15" ry="1.00" fill="#7e7480"/><ellipse cx="52.1" cy="34.0" rx="0.85" ry="0.81" fill="#7e7480"/><ellipse cx="45.9" cy="44.2" rx="0.62" ry="1.00" fill="#a59cab"/><ellipse cx="46.4" cy="44.9" rx="1.22" ry="1.16" fill="#9a90a0"/><ellipse cx="57.1" cy="41.2" rx="0.67" ry="0.79" fill="#7e7480"/><ellipse cx="34.8" cy="44.5" rx="1.11" ry="0.53" fill="#9a90a0"/><ellipse cx="34.5" cy="67.2" rx="1.38" ry="0.91" fill="#8d8290"/><ellipse cx="55.3" cy="79.8" rx="1.25" ry="1.13" fill="#8d8290"/><ellipse cx="58.6" cy="87.7" rx="1.33" ry="1.15" fill="#9a90a0"/><ellipse cx="36.1" cy="79.1" rx="0.89" ry="1.15" fill="#9a90a0"/><ellipse cx="53.3" cy="66.2" rx="0.82" ry="1.17" fill="#6e646e"/><ellipse cx="55.4" cy="22.4" rx="1.50" ry="0.72" fill="#a59cab"/><ellipse cx="36.5" cy="49.2" rx="1.52" ry="0.67" fill="#7e7480"/><ellipse cx="51.1" cy="28.5" rx="0.97" ry="0.66" fill="#a59cab"/><ellipse cx="37.0" cy="83.0" rx="1.28" ry="1.22" fill="#9a90a0"/><ellipse cx="56.6" cy="30.6" rx="1.37" ry="0.54" fill="#7e7480"/><ellipse cx="62.0" cy="45.3" rx="1.12" ry="1.05" fill="#8d8290"/><ellipse cx="39.8" cy="51.8" rx="1.46" ry="1.09" fill="#7e7480"/><ellipse cx="40.2" cy="87.3" rx="1.18" ry="0.79" fill="#8d8290"/><ellipse cx="45.7" cy="23.8" rx="1.34" ry="0.54" fill="#6e646e"/><ellipse cx="39.9" cy="59.9" rx="1.58" ry="0.97" fill="#7e7480"/><ellipse cx="54.7" cy="68.3" rx="0.82" ry="0.73" fill="#a59cab"/><ellipse cx="44.9" cy="38.4" rx="0.65" ry="0.89" fill="#6e646e"/><ellipse cx="52.2" cy="11.7" rx="0.60" ry="0.78" fill="#8d8290"/><ellipse cx="48.2" cy="51.7" rx="1.01" ry="0.74" fill="#9a90a0"/><ellipse cx="38.3" cy="58.7" rx="1.07" ry="0.61" fill="#9a90a0"/><ellipse cx="53.9" cy="45.2" rx="0.66" ry="0.62" fill="#7e7480"/><ellipse cx="44.5" cy="30.6" rx="0.61" ry="1.02" fill="#6e646e"/><ellipse cx="59.7" cy="56.4" rx="1.18" ry="0.98" fill="#6e646e"/><ellipse cx="54.7" cy="29.4" rx="1.50" ry="0.54" fill="#6e646e"/><ellipse cx="32.8" cy="24.5" rx="0.76" ry="1.23" fill="#8d8290"/><ellipse cx="32.4" cy="53.0" rx="1.54" ry="0.61" fill="#9a90a0"/><ellipse cx="48.1" cy="60.1" rx="1.25" ry="0.83" fill="#6e646e"/><ellipse cx="37.4" cy="34.1" rx="0.90" ry="0.54" fill="#a59cab"/><ellipse cx="54.2" cy="10.5" rx="1.44" ry="1.10" fill="#a59cab"/><ellipse cx="34.5" cy="61.1" rx="0.78" ry="1.30" fill="#7e7480"/><ellipse cx="39.2" cy="13.0" rx="0.94" ry="1.10" fill="#7e7480"/><ellipse cx="54.1" cy="30.7" rx="1.15" ry="0.85" fill="#6e646e"/><ellipse cx="62.1" cy="33.1" rx="1.53" ry="1.22" fill="#8d8290"/><ellipse cx="59.3" cy="11.2" rx="0.86" ry="0.69" fill="#9a90a0"/><ellipse cx="61.3" cy="68.2" rx="0.93" ry="1.20" fill="#7e7480"/><ellipse cx="50.6" cy="39.6" rx="1.45" ry="1.24" fill="#6e646e"/><ellipse cx="46.6" cy="75.5" rx="1.30" ry="1.19" fill="#a59cab"/><ellipse cx="61.6" cy="28.2" rx="1.48" ry="1.13" fill="#a59cab"/><ellipse cx="51.3" cy="16.1" rx="1.51" ry="0.62" fill="#8d8290"/><ellipse cx="35.5" cy="58.5" rx="0.76" ry="1.28" fill="#8d8290"/><ellipse cx="33.0" cy="20.8" rx="1.24" ry="0.53" fill="#8d8290"/><ellipse cx="54.8" cy="15.1" rx="1.19" ry="0.79" fill="#6e646e"/><ellipse cx="59.6" cy="15.1" rx="1.47" ry="1.23" fill="#a59cab"/><ellipse cx="35.3" cy="26.0" rx="0.71" ry="0.53" fill="#8d8290"/><ellipse cx="57.6" cy="59.3" rx="0.89" ry="0.58" fill="#8d8290"/><ellipse cx="56.6" cy="60.4" rx="0.89" ry="0.77" fill="#7e7480"/><ellipse cx="32.6" cy="30.0" rx="0.88" ry="1.07" fill="#7e7480"/><ellipse cx="60.2" cy="70.0" rx="1.20" ry="0.88" fill="#7e7480"/><ellipse cx="51.2" cy="12.4" rx="1.01" ry="0.85" fill="#8d8290"/><ellipse cx="42.8" cy="65.0" rx="1.14" ry="0.67" fill="#8d8290"/><ellipse cx="49.8" cy="32.4" rx="1.04" ry="0.92" fill="#7e7480"/><ellipse cx="55.6" cy="86.3" rx="0.60" ry="0.89" fill="#a59cab"/><ellipse cx="53.6" cy="74.4" rx="1.57" ry="0.97" fill="#6e646e"/><ellipse cx="40.1" cy="83.6" rx="0.88" ry="0.67" fill="#9a90a0"/><ellipse cx="47.4" cy="18.6" rx="1.24" ry="0.56" fill="#6e646e"/><ellipse cx="56.4" cy="59.0" rx="0.96" ry="0.82" fill="#a59cab"/><ellipse cx="59.6" cy="68.1" rx="1.02" ry="1.02" fill="#7e7480"/><ellipse cx="38.4" cy="30.5" rx="1.50" ry="0.90" fill="#a59cab"/><ellipse cx="62.5" cy="59.2" rx="1.54" ry="0.60" fill="#6e646e"/><ellipse cx="55.4" cy="68.7" rx="1.25" ry="0.78" fill="#7e7480"/><ellipse cx="48.2" cy="77.7" rx="1.05" ry="0.94" fill="#7e7480"/><ellipse cx="37.3" cy="44.2" rx="1.37" ry="0.96" fill="#9a90a0"/><ellipse cx="42.4" cy="60.1" rx="1.30" ry="0.91" fill="#7e7480"/><ellipse cx="41.3" cy="64.8" rx="1.44" ry="0.62" fill="#9a90a0"/><ellipse cx="62.2" cy="66.4" rx="1.20" ry="0.78" fill="#9a90a0"/><ellipse cx="42.2" cy="24.8" rx="1.58" ry="1.08" fill="#8d8290"/><ellipse cx="37.1" cy="61.3" rx="0.80" ry="0.62" fill="#9a90a0"/><ellipse cx="56.6" cy="67.2" rx="1.03" ry="0.66" fill="#8d8290"/><ellipse cx="40.7" cy="79.0" rx="1.06" ry="0.51" fill="#a59cab"/><ellipse cx="53.5" cy="49.0" rx="1.23" ry="0.87" fill="#9a90a0"/><ellipse cx="40.0" cy="67.6" rx="0.61" ry="0.69" fill="#a59cab"/><ellipse cx="53.7" cy="55.8" rx="1.25" ry="1.18" fill="#6e646e"/><ellipse cx="58.4" cy="63.0" rx="1.24" ry="0.86" fill="#7e7480"/><ellipse cx="40.1" cy="64.7" rx="1.49" ry="0.69" fill="#a59cab"/><ellipse cx="54.1" cy="59.1" rx="0.85" ry="0.84" fill="#a59cab"/><ellipse cx="32.6" cy="77.0" rx="1.12" ry="1.03" fill="#9a90a0"/><ellipse cx="59.7" cy="35.6" rx="0.61" ry="1.17" fill="#8d8290"/><ellipse cx="33.2" cy="52.4" rx="0.76" ry="1.13" fill="#9a90a0"/><ellipse cx="48.1" cy="17.9" rx="1.17" ry="0.93" fill="#a59cab"/><ellipse cx="47.9" cy="59.9" rx="1.43" ry="0.92" fill="#a59cab"/><ellipse cx="55.0" cy="45.6" rx="1.59" ry="0.65" fill="#6e646e"/><ellipse cx="55.6" cy="19.5" rx="1.58" ry="0.78" fill="#8d8290"/><ellipse cx="39.8" cy="39.8" rx="0.66" ry="0.56" fill="#a59cab"/><ellipse cx="51.5" cy="62.6" rx="1.18" ry="0.59" fill="#7e7480"/><ellipse cx="55.0" cy="83.3" rx="1.13" ry="0.68" fill="#a59cab"/><ellipse cx="46.3" cy="22.8" rx="1.53" ry="0.56" fill="#9a90a0"/><ellipse cx="46.5" cy="53.8" rx="0.83" ry="1.27" fill="#7e7480"/><ellipse cx="52.6" cy="74.8" rx="1.40" ry="0.83" fill="#7e7480"/><ellipse cx="55.6" cy="60.7" rx="1.38" ry="0.88" fill="#9a90a0"/><ellipse cx="40.3" cy="39.3" rx="0.85" ry="0.84" fill="#9a90a0"/><ellipse cx="46.9" cy="72.8" rx="1.40" ry="0.79" fill="#7e7480"/><ellipse cx="41.9" cy="47.8" rx="1.22" ry="0.57" fill="#7e7480"/><ellipse cx="36.7" cy="33.6" rx="0.99" ry="0.57" fill="#6e646e"/><ellipse cx="60.1" cy="71.2" rx="0.74" ry="1.17" fill="#6e646e"/><ellipse cx="32.5" cy="10.9" rx="1.55" ry="1.02" fill="#7e7480"/><ellipse cx="50.9" cy="55.1" rx="1.45" ry="0.65" fill="#a59cab"/><ellipse cx="42.7" cy="21.9" rx="1.50" ry="1.13" fill="#9a90a0"/><ellipse cx="50.9" cy="63.7" rx="1.58" ry="0.57" fill="#6e646e"/><ellipse cx="56.4" cy="75.4" rx="0.80" ry="1.05" fill="#6e646e"/><ellipse cx="34.4" cy="75.5" rx="1.27" ry="0.59" fill="#8d8290"/><ellipse cx="40.2" cy="28.3" rx="0.74" ry="0.89" fill="#8d8290"/><ellipse cx="47.0" cy="80.6" rx="1.30" ry="0.70" fill="#9a90a0"/><ellipse cx="48.7" cy="77.3" rx="0.61" ry="1.17" fill="#a59cab"/><ellipse cx="53.6" cy="48.8" rx="0.90" ry="0.87" fill="#a59cab"/><ellipse cx="45.0" cy="84.9" rx="0.68" ry="1.01" fill="#8d8290"/><ellipse cx="32.6" cy="13.6" rx="1.34" ry="1.30" fill="#8d8290"/><ellipse cx="47.8" cy="47.8" rx="1.50" ry="0.53" fill="#a59cab"/><ellipse cx="51.4" cy="36.4" rx="1.46" ry="0.79" fill="#a59cab"/><ellipse cx="56.1" cy="53.2" rx="1.51" ry="0.73" fill="#7e7480"/><ellipse cx="45.1" cy="53.2" rx="1.43" ry="0.73" fill="#a59cab"/><ellipse cx="44.5" cy="49.3" rx="0.87" ry="0.91" fill="#9a90a0"/><ellipse cx="52.3" cy="71.8" rx="0.93" ry="0.75" fill="#7e7480"/><ellipse cx="36.0" cy="85.9" rx="0.69" ry="1.30" fill="#a59cab"/><path d="M54.0,77.3 L52.2,81.5" stroke="#2c242a" stroke-width="0.75"/><path d="M33.2,24.4 L33.6,30.1" stroke="#2c242a" stroke-width="0.93"/><path d="M55.9,79.1 L56.3,83.6" stroke="#2c242a" stroke-width="0.91"/><path d="M53.2,55.3 L52.0,60.0" stroke="#2c242a" stroke-width="0.93"/><path d="M46.3,68.0 L45.0,70.4" stroke="#2c242a" stroke-width="0.62"/><path d="M55.5,79.5 L54.9,84.1" stroke="#2c242a" stroke-width="1.01"/><path d="M55.8,52.7 L55.0,55.8" stroke="#2c242a" stroke-width="0.81"/><path d="M42.2,42.7 L44.0,47.3" stroke="#2c242a" stroke-width="0.63"/><path d="M49.5,13.0 L50.7,15.5" stroke="#2c242a" stroke-width="0.89"/><path d="M59.6,43.9 L59.2,46.0" stroke="#2c242a" stroke-width="0.90"/><path d="M60.2,84.5 L59.8,88.4" stroke="#2c242a" stroke-width="0.65"/><path d="M51.7,26.1 L49.8,28.7" stroke="#2c242a" stroke-width="0.60"/><path d="M52.8,19.2 L51.2,25.1" stroke="#2c242a" stroke-width="1.03"/><path d="M36.7,11.4 L35.7,16.2" stroke="#2c242a" stroke-width="0.97"/><path d="M38.4,13.8 L39.3,18.9" stroke="#2c242a" stroke-width="1.03"/><path d="M54.2,16.4 L55.0,20.9" stroke="#2c242a" stroke-width="0.83"/><path d="M60.0,29.3 L60.9,35.2" stroke="#2c242a" stroke-width="0.61"/><path d="M33.4,59.5 L31.7,64.7" stroke="#2c242a" stroke-width="0.76"/><path d="M54.2,22.6 L54.1,28.1" stroke="#2c242a" stroke-width="0.63"/><path d="M43.7,53.7 L44.4,57.5" stroke="#2c242a" stroke-width="0.67"/><path d="M56.1,37.6 L56.6,42.2" stroke="#2c242a" stroke-width="0.81"/><path d="M44.2,69.8 L45.3,75.5" stroke="#2c242a" stroke-width="0.88"/><path d="M41.5,14.6 L42.3,20.5" stroke="#2c242a" stroke-width="1.01"/><path d="M42.6,56.0 L44.0,62.0" stroke="#2c242a" stroke-width="0.90"/><path d="M41.9,42.6 L41.5,48.1" stroke="#2c242a" stroke-width="0.94"/><path d="M50.5,78.1 L49.6,83.3" stroke="#2c242a" stroke-width="0.60"/><path d="M40.6,42.1 L41.9,46.5" stroke="#2c242a" stroke-width="1.04"/><path d="M34.2,73.3 L35.7,78.6" stroke="#2c242a" stroke-width="0.89"/><path d="M40.9,74.7 L41.7,79.9" stroke="#2c242a" stroke-width="1.06"/><path d="M43.1,16.5 L44.2,20.7" stroke="#2c242a" stroke-width="0.70"/><path d="M54.8,80.8 L55.2,83.7" stroke="#2c242a" stroke-width="0.94"/><path d="M46.5,25.7 L47.5,28.7" stroke="#2c242a" stroke-width="1.00"/><path d="M46.3,16.7 L47.4,21.9" stroke="#2c242a" stroke-width="0.72"/><path d="M49.8,78.2 L49.9,83.7" stroke="#2c242a" stroke-width="0.84"/><path d="M50.1,24.4 L48.8,27.1" stroke="#2c242a" stroke-width="0.95"/><path d="M43.5,52.9 L43.6,56.5" stroke="#2c242a" stroke-width="0.67"/><path d="M34.3,85.8 L32.7,89.3" stroke="#2c242a" stroke-width="0.92"/><path d="M55.8,21.9 L55.2,26.3" stroke="#2c242a" stroke-width="0.86"/><path d="M33.6,12.6 L35.1,18.5" stroke="#2c242a" stroke-width="0.84"/><path d="M49.4,29.9 L49.2,35.0" stroke="#2c242a" stroke-width="1.07"/><path d="M55.3,72.2 L54.3,78.1" stroke="#2c242a" stroke-width="0.62"/><path d="M38.8,23.7 L37.0,26.1" stroke="#2c242a" stroke-width="0.88"/><path d="M58.2,44.8 L59.9,50.6" stroke="#2c242a" stroke-width="0.63"/><path d="M50.3,40.2 L52.2,42.7" stroke="#2c242a" stroke-width="0.73"/><path d="M49.4,58.7 L50.0,64.5" stroke="#2c242a" stroke-width="0.80"/><path d="M46.0,22.1 L48.0,28.0" stroke="#2c242a" stroke-width="0.71"/><path d="M34.1,29.4 L35.7,32.9" stroke="#2c242a" stroke-width="1.05"/><path d="M57.3,13.6 L58.1,18.7" stroke="#2c242a" stroke-width="0.92"/><path d="M61.6,14.2 L62.6,16.8" stroke="#2c242a" stroke-width="1.07"/><path d="M52.6,32.7 L53.7,37.1" stroke="#2c242a" stroke-width="0.65"/><path d="M42.4,29.5 L42.3,32.0" stroke="#2c242a" stroke-width="0.68"/><path d="M39.9,20.9 L38.0,25.6" stroke="#2c242a" stroke-width="0.96"/><path d="M38.7,12.7 L37.5,18.4" stroke="#2c242a" stroke-width="1.07"/><path d="M58.1,77.5 L57.9,80.1" stroke="#2c242a" stroke-width="0.65"/><path d="M59.9,74.0 L59.7,78.5" stroke="#2c242a" stroke-width="0.77"/><path d="M56.9,46.3 L55.4,50.8" stroke="#2c242a" stroke-width="0.71"/><path d="M34.6,64.2 L33.2,68.5" stroke="#2c242a" stroke-width="1.04"/><path d="M40.7,41.3 L39.8,43.9" stroke="#2c242a" stroke-width="1.02"/><path d="M42.7,22.8 L42.0,26.7" stroke="#2c242a" stroke-width="1.05"/><path d="M36.3,84.4 L37.9,86.6" stroke="#2c242a" stroke-width="0.93"/><path d="M39.1,46.3 L38.2,49.4" stroke="#2c242a" stroke-width="0.70"/><path d="M43.6,85.3 L45.3,91.3" stroke="#2c242a" stroke-width="0.65"/><path d="M41.4,78.1 L42.3,80.3" stroke="#2c242a" stroke-width="0.75"/><path d="M61.4,11.2 L60.7,16.4" stroke="#2c242a" stroke-width="0.67"/><path d="M33.1,73.3 L31.8,77.4" stroke="#2c242a" stroke-width="0.82"/><path d="M59.4,26.6 L58.0,30.9" stroke="#2c242a" stroke-width="0.69"/><path d="M55.3,64.1 L53.7,66.9" stroke="#2c242a" stroke-width="0.64"/><path d="M50.6,47.7 L49.5,50.8" stroke="#2c242a" stroke-width="0.91"/><path d="M53.5,71.7 L52.3,76.0" stroke="#2c242a" stroke-width="0.63"/><path d="M54.2,41.0 L52.5,45.9" stroke="#2c242a" stroke-width="1.01"/></g><rect x="30" y="8" width="36" height="82" fill="url(#gBarkShade)"/></g></g><g transform="translate(551,196)"><clipPath id="cpLog"><path d="M11.8,32.3 L88.8,32.8 L86.8,66.4 L9.9,61.4 A6.5,14.6 0 0 1 11.8,32.3 Z"/></clipPath><g clip-path="url(#cpLog)"><rect x="0" y="30" width="97" height="40" fill="#d9d0c3"/><g filter="url(#fTex)"><ellipse cx="44.2" cy="50.9" rx="4.73" ry="0.85" fill="#e0d8cc" opacity="0.45"/><ellipse cx="76.4" cy="39.1" rx="4.31" ry="0.86" fill="#e0d8cc" opacity="0.45"/><ellipse cx="71.4" cy="36.0" rx="2.56" ry="0.57" fill="#c9bba7" opacity="0.45"/><ellipse cx="55.6" cy="45.7" rx="3.09" ry="1.05" fill="#e6dfd5" opacity="0.45"/><ellipse cx="57.9" cy="59.6" rx="1.72" ry="0.53" fill="#e6dfd5" opacity="0.45"/><ellipse cx="56.0" cy="57.9" rx="2.64" ry="0.94" fill="#e6dfd5" opacity="0.45"/><ellipse cx="49.5" cy="53.5" rx="3.25" ry="1.00" fill="#bfae98" opacity="0.45"/><ellipse cx="60.4" cy="46.0" rx="3.43" ry="1.20" fill="#c9bba7" opacity="0.45"/><ellipse cx="64.6" cy="43.1" rx="2.30" ry="0.72" fill="#c9bba7" opacity="0.45"/><ellipse cx="53.1" cy="36.5" rx="1.88" ry="0.72" fill="#c9bba7" opacity="0.45"/><ellipse cx="84.6" cy="60.1" rx="1.50" ry="0.66" fill="#c9bba7" opacity="0.45"/><ellipse cx="45.6" cy="64.4" rx="2.89" ry="0.55" fill="#e6dfd5" opacity="0.45"/><ellipse cx="70.3" cy="41.6" rx="1.81" ry="0.75" fill="#bfae98" opacity="0.45"/><ellipse cx="68.6" cy="36.8" rx="2.36" ry="0.58" fill="#c9bba7" opacity="0.45"/><ellipse cx="45.2" cy="48.6" rx="3.89" ry="0.64" fill="#e0d8cc" opacity="0.45"/><ellipse cx="23.3" cy="56.4" rx="1.96" ry="0.98" fill="#c9bba7" opacity="0.45"/><ellipse cx="39.6" cy="64.7" rx="1.50" ry="1.15" fill="#e0d8cc" opacity="0.45"/><ellipse cx="32.3" cy="61.3" rx="2.24" ry="0.80" fill="#e0d8cc" opacity="0.45"/><ellipse cx="59.3" cy="36.2" rx="4.96" ry="0.66" fill="#d2c6b4" opacity="0.45"/><ellipse cx="8.8" cy="52.5" rx="4.41" ry="0.79" fill="#c9bba7" opacity="0.45"/><ellipse cx="15.2" cy="51.6" rx="2.35" ry="0.95" fill="#d2c6b4" opacity="0.45"/><ellipse cx="57.8" cy="37.1" rx="3.56" ry="1.12" fill="#e6dfd5" opacity="0.45"/><ellipse cx="77.3" cy="38.9" rx="2.04" ry="1.18" fill="#e0d8cc" opacity="0.45"/><ellipse cx="28.0" cy="39.1" rx="4.09" ry="1.21" fill="#e6dfd5" opacity="0.45"/><ellipse cx="63.0" cy="45.4" rx="3.19" ry="0.56" fill="#c9bba7" opacity="0.45"/><ellipse cx="16.3" cy="34.2" rx="4.87" ry="0.68" fill="#bfae98" opacity="0.45"/><ellipse cx="28.6" cy="59.4" rx="3.59" ry="0.72" fill="#e6dfd5" opacity="0.45"/><ellipse cx="82.3" cy="64.3" rx="1.94" ry="0.86" fill="#e0d8cc" opacity="0.45"/><ellipse cx="57.1" cy="42.0" rx="4.71" ry="0.65" fill="#c9bba7" opacity="0.45"/><ellipse cx="13.5" cy="46.2" rx="2.37" ry="0.53" fill="#d2c6b4" opacity="0.45"/><ellipse cx="37.5" cy="51.3" rx="1.96" ry="0.77" fill="#bfae98" opacity="0.45"/><ellipse cx="86.4" cy="54.0" rx="3.92" ry="0.94" fill="#e6dfd5" opacity="0.45"/><ellipse cx="55.2" cy="62.6" rx="3.16" ry="0.77" fill="#d2c6b4" opacity="0.45"/><ellipse cx="85.0" cy="33.7" rx="3.73" ry="0.86" fill="#d2c6b4" opacity="0.45"/><ellipse cx="33.5" cy="65.0" rx="1.76" ry="0.91" fill="#c9bba7" opacity="0.45"/><ellipse cx="80.0" cy="56.6" rx="3.96" ry="1.09" fill="#d2c6b4" opacity="0.45"/><ellipse cx="36.1" cy="54.9" rx="4.65" ry="1.15" fill="#bfae98" opacity="0.45"/><ellipse cx="83.5" cy="34.0" rx="3.25" ry="0.51" fill="#bfae98" opacity="0.45"/><ellipse cx="38.3" cy="33.4" rx="1.75" ry="0.57" fill="#c9bba7" opacity="0.45"/><ellipse cx="87.5" cy="61.2" rx="4.05" ry="0.79" fill="#e0d8cc" opacity="0.45"/><ellipse cx="44.6" cy="47.8" rx="3.39" ry="0.89" fill="#e0d8cc" opacity="0.45"/><ellipse cx="10.4" cy="52.2" rx="3.18" ry="0.67" fill="#c9bba7" opacity="0.45"/><ellipse cx="47.8" cy="52.7" rx="4.72" ry="0.69" fill="#c9bba7" opacity="0.45"/><ellipse cx="37.4" cy="37.6" rx="3.64" ry="0.89" fill="#d2c6b4" opacity="0.45"/><ellipse cx="60.8" cy="47.1" rx="4.62" ry="0.75" fill="#d2c6b4" opacity="0.45"/><ellipse cx="23.9" cy="46.8" rx="4.32" ry="1.19" fill="#e6dfd5" opacity="0.45"/><ellipse cx="38.8" cy="51.7" rx="2.61" ry="0.60" fill="#bfae98" opacity="0.45"/><ellipse cx="36.1" cy="61.7" rx="1.64" ry="0.55" fill="#d2c6b4" opacity="0.45"/><ellipse cx="73.7" cy="36.6" rx="3.15" ry="1.19" fill="#bfae98" opacity="0.45"/><ellipse cx="38.6" cy="49.6" rx="3.85" ry="1.04" fill="#e0d8cc" opacity="0.45"/><ellipse cx="44.2" cy="35.4" rx="1.61" ry="1.15" fill="#c9bba7" opacity="0.45"/><ellipse cx="62.3" cy="42.0" rx="2.74" ry="0.99" fill="#e0d8cc" opacity="0.45"/><ellipse cx="9.5" cy="37.3" rx="3.09" ry="0.52" fill="#d2c6b4" opacity="0.45"/><ellipse cx="27.0" cy="37.5" rx="1.66" ry="0.97" fill="#bfae98" opacity="0.45"/><ellipse cx="16.7" cy="50.1" rx="3.74" ry="0.78" fill="#c9bba7" opacity="0.45"/><ellipse cx="62.8" cy="39.4" rx="3.16" ry="0.63" fill="#c9bba7" opacity="0.45"/><ellipse cx="68.4" cy="50.1" rx="1.63" ry="0.67" fill="#d2c6b4" opacity="0.45"/><ellipse cx="51.2" cy="63.3" rx="3.25" ry="1.25" fill="#e6dfd5" opacity="0.45"/><ellipse cx="39.5" cy="58.3" rx="4.67" ry="0.57" fill="#bfae98" opacity="0.45"/><ellipse cx="18.4" cy="47.5" rx="3.69" ry="1.18" fill="#bfae98" opacity="0.45"/></g><rect x="0" y="30" width="97" height="40" fill="url(#gLogShade)"/></g><ellipse cx="88.2" cy="49.6" rx="4.6" ry="16.9" fill="#c5b89f" transform="rotate(-4 88.2 49.6)"/><ellipse cx="88.6" cy="49.6" rx="3" ry="14" fill="#d2c7b2" transform="rotate(-4 88.6 49.6)"/></g><g transform="translate(655,196)"><clipPath id="cpHl"><path d="M4.4,56.1 Q4,43 11.8,39.9 L86.8,41.8 Q92,45 92.2,55.6 L84.3,59.6 Z"/></clipPath><g clip-path="url(#cpHl)"><rect x="0" y="36" width="97" height="26" fill="#d6ccbc"/><g filter="url(#fTex)"><ellipse cx="27.2" cy="52.3" rx="3.55" ry="1.01" fill="#e0d8cb" opacity="0.45"/><ellipse cx="59.5" cy="52.0" rx="4.11" ry="0.88" fill="#e0d8cb" opacity="0.45"/><ellipse cx="16.7" cy="49.6" rx="2.14" ry="0.68" fill="#dcd2c3" opacity="0.45"/><ellipse cx="16.4" cy="52.3" rx="4.49" ry="1.10" fill="#e0d8cb" opacity="0.45"/><ellipse cx="13.0" cy="54.3" rx="4.17" ry="0.66" fill="#dcd2c3" opacity="0.45"/><ellipse cx="67.1" cy="57.1" rx="3.88" ry="0.65" fill="#e0d8cb" opacity="0.45"/><ellipse cx="45.9" cy="53.6" rx="3.19" ry="0.76" fill="#b9a68c" opacity="0.45"/><ellipse cx="78.9" cy="51.5" rx="3.47" ry="0.71" fill="#b9a68c" opacity="0.45"/><ellipse cx="62.7" cy="50.0" rx="3.75" ry="0.58" fill="#dcd2c3" opacity="0.45"/><ellipse cx="50.0" cy="45.3" rx="2.04" ry="0.71" fill="#b9a68c" opacity="0.45"/><ellipse cx="43.7" cy="50.9" rx="2.69" ry="0.58" fill="#dcd2c3" opacity="0.45"/><ellipse cx="51.1" cy="50.2" rx="4.16" ry="0.92" fill="#e0d8cb" opacity="0.45"/><ellipse cx="12.0" cy="51.7" rx="4.36" ry="0.73" fill="#dcd2c3" opacity="0.45"/><ellipse cx="82.5" cy="40.8" rx="1.93" ry="0.98" fill="#dcd2c3" opacity="0.45"/><ellipse cx="58.4" cy="42.9" rx="2.74" ry="1.02" fill="#b9a68c" opacity="0.45"/><ellipse cx="22.7" cy="55.4" rx="2.62" ry="0.93" fill="#e0d8cb" opacity="0.45"/><ellipse cx="79.9" cy="52.7" rx="2.21" ry="0.80" fill="#c3b39c" opacity="0.45"/><ellipse cx="53.6" cy="50.6" rx="2.58" ry="0.94" fill="#b9a68c" opacity="0.45"/><ellipse cx="20.9" cy="43.5" rx="3.86" ry="0.83" fill="#e0d8cb" opacity="0.45"/><ellipse cx="19.7" cy="47.7" rx="3.29" ry="0.98" fill="#c3b39c" opacity="0.45"/><ellipse cx="85.6" cy="54.9" rx="3.44" ry="0.82" fill="#e0d8cb" opacity="0.45"/><ellipse cx="87.8" cy="42.2" rx="2.40" ry="0.66" fill="#c3b39c" opacity="0.45"/><ellipse cx="82.9" cy="49.4" rx="4.05" ry="0.52" fill="#b9a68c" opacity="0.45"/><ellipse cx="33.4" cy="48.9" rx="4.41" ry="0.81" fill="#dcd2c3" opacity="0.45"/><ellipse cx="24.3" cy="43.7" rx="3.90" ry="0.73" fill="#e0d8cb" opacity="0.45"/><ellipse cx="66.5" cy="44.6" rx="3.55" ry="1.01" fill="#b9a68c" opacity="0.45"/><ellipse cx="40.8" cy="44.2" rx="3.82" ry="0.86" fill="#dcd2c3" opacity="0.45"/><ellipse cx="22.7" cy="46.3" rx="1.61" ry="0.74" fill="#c3b39c" opacity="0.45"/><ellipse cx="11.6" cy="40.8" rx="4.26" ry="0.89" fill="#b9a68c" opacity="0.45"/><ellipse cx="21.6" cy="48.7" rx="3.16" ry="0.70" fill="#b9a68c" opacity="0.45"/><ellipse cx="49.3" cy="57.1" rx="1.95" ry="0.53" fill="#b9a68c" opacity="0.45"/><ellipse cx="73.5" cy="43.9" rx="2.41" ry="0.73" fill="#c3b39c" opacity="0.45"/><ellipse cx="34.5" cy="41.8" rx="2.97" ry="0.85" fill="#dcd2c3" opacity="0.45"/><ellipse cx="9.6" cy="49.6" rx="1.89" ry="0.98" fill="#b9a68c" opacity="0.45"/><ellipse cx="19.7" cy="56.0" rx="3.72" ry="1.04" fill="#e0d8cb" opacity="0.45"/><ellipse cx="80.8" cy="52.3" rx="1.77" ry="1.06" fill="#c3b39c" opacity="0.45"/><ellipse cx="34.3" cy="54.4" rx="2.14" ry="0.93" fill="#e0d8cb" opacity="0.45"/><ellipse cx="48.6" cy="56.6" rx="2.82" ry="0.84" fill="#c3b39c" opacity="0.45"/><ellipse cx="74.9" cy="56.2" rx="1.85" ry="0.58" fill="#b9a68c" opacity="0.45"/><ellipse cx="49.8" cy="45.4" rx="4.39" ry="0.68" fill="#c3b39c" opacity="0.45"/><ellipse cx="36.6" cy="56.8" rx="2.00" ry="0.51" fill="#b9a68c" opacity="0.45"/><ellipse cx="77.0" cy="58.0" rx="3.93" ry="0.75" fill="#b9a68c" opacity="0.45"/><ellipse cx="81.3" cy="40.7" rx="1.78" ry="0.74" fill="#dcd2c3" opacity="0.45"/><ellipse cx="44.6" cy="44.8" rx="3.85" ry="0.77" fill="#c3b39c" opacity="0.45"/><ellipse cx="49.2" cy="49.6" rx="2.33" ry="0.64" fill="#e0d8cb" opacity="0.45"/><ellipse cx="84.2" cy="57.1" rx="2.62" ry="0.59" fill="#dcd2c3" opacity="0.45"/><ellipse cx="39.6" cy="42.8" rx="3.23" ry="1.07" fill="#dcd2c3" opacity="0.45"/><ellipse cx="21.9" cy="46.8" rx="2.93" ry="0.61" fill="#c3b39c" opacity="0.45"/><ellipse cx="45.5" cy="49.0" rx="1.88" ry="0.50" fill="#e0d8cb" opacity="0.45"/><ellipse cx="31.2" cy="55.9" rx="2.99" ry="0.81" fill="#c3b39c" opacity="0.45"/></g><rect x="0" y="36" width="97" height="26" fill="url(#gHlShade)"/><path d="M84.5,41.8 Q92,45 92.2,55.6 L84.3,59.6 Q87,50 84.5,41.8 Z" fill="#c2b08e"/></g></g><g transform="translate(759,196)"><clipPath id="cpPl"><path d="M33.8,11.3 L59.5,11.3 L57,86.2 L32.4,83.7 Z"/></clipPath><g clip-path="url(#cpPl)"><rect x="30" y="10" width="32" height="78" fill="#d8cebf"/><g filter="url(#fTex)"><ellipse cx="47.1" cy="71.7" rx="2.43" ry="0.93" fill="#bba88e" opacity="0.45"/><ellipse cx="36.0" cy="14.0" rx="1.42" ry="1.62" fill="#bba88e" opacity="0.45"/><ellipse cx="56.2" cy="71.4" rx="1.87" ry="1.53" fill="#ddd3c4" opacity="0.45"/><ellipse cx="36.7" cy="52.8" rx="0.99" ry="1.69" fill="#e2dacd" opacity="0.45"/><ellipse cx="37.1" cy="64.2" rx="1.73" ry="1.93" fill="#e2dacd" opacity="0.45"/><ellipse cx="41.9" cy="21.1" rx="2.00" ry="0.60" fill="#ddd3c4" opacity="0.45"/><ellipse cx="35.2" cy="81.5" rx="1.58" ry="1.99" fill="#e2dacd" opacity="0.45"/><ellipse cx="51.4" cy="42.2" rx="1.64" ry="1.00" fill="#ddd3c4" opacity="0.45"/><ellipse cx="43.0" cy="15.8" rx="2.07" ry="1.03" fill="#ddd3c4" opacity="0.45"/><ellipse cx="43.1" cy="69.3" rx="2.27" ry="0.86" fill="#e2dacd" opacity="0.45"/><ellipse cx="58.8" cy="51.0" rx="1.38" ry="0.90" fill="#bba88e" opacity="0.45"/><ellipse cx="38.2" cy="56.7" rx="1.72" ry="1.33" fill="#e2dacd" opacity="0.45"/><ellipse cx="39.8" cy="34.8" rx="1.36" ry="0.76" fill="#c4b39b" opacity="0.45"/><ellipse cx="57.5" cy="54.8" rx="1.23" ry="0.51" fill="#bba88e" opacity="0.45"/><ellipse cx="33.5" cy="67.1" rx="1.58" ry="0.58" fill="#e2dacd" opacity="0.45"/><ellipse cx="41.4" cy="17.6" rx="2.48" ry="1.87" fill="#c4b39b" opacity="0.45"/><ellipse cx="49.8" cy="50.9" rx="0.99" ry="1.23" fill="#ddd3c4" opacity="0.45"/><ellipse cx="37.9" cy="85.7" rx="2.43" ry="1.51" fill="#e2dacd" opacity="0.45"/><ellipse cx="34.4" cy="84.0" rx="1.28" ry="1.83" fill="#bba88e" opacity="0.45"/><ellipse cx="54.9" cy="15.7" rx="2.37" ry="0.64" fill="#bba88e" opacity="0.45"/><ellipse cx="55.7" cy="60.7" rx="1.46" ry="0.61" fill="#c4b39b" opacity="0.45"/><ellipse cx="47.7" cy="84.5" rx="1.14" ry="1.94" fill="#e2dacd" opacity="0.45"/><ellipse cx="54.6" cy="15.6" rx="2.30" ry="1.38" fill="#ddd3c4" opacity="0.45"/><ellipse cx="39.0" cy="42.2" rx="1.85" ry="0.62" fill="#ddd3c4" opacity="0.45"/><ellipse cx="53.3" cy="29.0" rx="1.31" ry="0.78" fill="#bba88e" opacity="0.45"/><ellipse cx="49.2" cy="83.2" rx="1.76" ry="1.28" fill="#c4b39b" opacity="0.45"/><ellipse cx="57.1" cy="36.3" rx="1.76" ry="1.89" fill="#e2dacd" opacity="0.45"/><ellipse cx="49.6" cy="39.2" rx="2.50" ry="1.63" fill="#bba88e" opacity="0.45"/><ellipse cx="44.7" cy="45.2" rx="0.91" ry="0.66" fill="#c4b39b" opacity="0.45"/><ellipse cx="38.2" cy="54.6" rx="1.98" ry="1.65" fill="#ddd3c4" opacity="0.45"/><ellipse cx="45.5" cy="75.3" rx="0.99" ry="1.32" fill="#ddd3c4" opacity="0.45"/><ellipse cx="33.3" cy="31.5" rx="2.48" ry="1.74" fill="#ddd3c4" opacity="0.45"/><ellipse cx="42.1" cy="36.3" rx="0.84" ry="0.65" fill="#c4b39b" opacity="0.45"/><ellipse cx="33.7" cy="46.9" rx="2.34" ry="1.42" fill="#c4b39b" opacity="0.45"/><ellipse cx="54.0" cy="72.7" rx="2.47" ry="1.18" fill="#e2dacd" opacity="0.45"/><ellipse cx="56.4" cy="14.2" rx="1.45" ry="0.68" fill="#c4b39b" opacity="0.45"/><ellipse cx="52.9" cy="16.4" rx="2.46" ry="0.89" fill="#bba88e" opacity="0.45"/><ellipse cx="42.4" cy="52.2" rx="2.18" ry="1.96" fill="#ddd3c4" opacity="0.45"/><ellipse cx="57.6" cy="50.9" rx="2.49" ry="0.62" fill="#c4b39b" opacity="0.45"/><ellipse cx="49.9" cy="76.0" rx="1.32" ry="0.68" fill="#e2dacd" opacity="0.45"/><ellipse cx="47.5" cy="30.0" rx="1.62" ry="0.92" fill="#c4b39b" opacity="0.45"/><ellipse cx="39.9" cy="17.5" rx="1.49" ry="1.53" fill="#ddd3c4" opacity="0.45"/><ellipse cx="42.9" cy="27.8" rx="2.47" ry="1.68" fill="#e2dacd" opacity="0.45"/><ellipse cx="54.2" cy="18.2" rx="1.52" ry="1.85" fill="#e2dacd" opacity="0.45"/><ellipse cx="50.9" cy="22.6" rx="1.78" ry="1.90" fill="#ddd3c4" opacity="0.45"/></g></g></g><g transform="translate(239,302)"><path d="M16.4,64.6 A31.8,32.8 0 0 1 80,64.6 A31.8,4.2 0 0 1 16.4,64.6 Z" fill="url(#gSph)"/></g><g transform="translate(343,302)"><path d="M47.8,16.8 L79.6,80.2 A31.3,6 0 0 1 17,80.2 Z" fill="url(#gH)"/><path d="M47.8,16.8 L79.6,80.2 A31.3,6 0 0 1 17,80.2 Z" fill="url(#gConeV)"/></g><g transform="translate(447,302)"><clipPath id="cpCone"><path d="M47.6,12.8 L50,12.8 L73.7,78 A25.2,9 0 0 1 23.3,80 Z"/></clipPath><g clip-path="url(#cpCone)"><g filter="url(#fBlur)"><path d="M47.05,12.8 L47.39,12.8 L21.18,88 L20.25,88 Z" fill="rgb(190,190,190)"/><path d="M47.09,12.8 L47.42,12.8 L21.81,88 L20.88,88 Z" fill="rgb(190,190,190)"/><path d="M47.12,12.8 L47.46,12.8 L22.44,88 L21.51,88 Z" fill="rgb(190,190,190)"/><path d="M47.16,12.8 L47.49,12.8 L23.07,88 L22.14,88 Z" fill="rgb(190,190,190)"/><path d="M47.19,12.8 L47.53,12.8 L23.71,88 L22.77,88 Z" fill="rgb(190,190,190)"/><path d="M47.23,12.8 L47.56,12.8 L24.34,88 L23.41,88 Z" fill="rgb(190,190,190)"/><path d="M47.26,12.8 L47.60,12.8 L24.97,88 L24.04,88 Z" fill="rgb(154,154,154)"/><path d="M47.30,12.8 L47.63,12.8 L25.60,88 L24.67,88 Z" fill="rgb(105,105,105)"/><path d="M47.33,12.8 L47.67,12.8 L26.23,88 L25.30,88 Z" fill="rgb(56,56,56)"/><path d="M47.37,12.8 L47.71,12.8 L26.86,88 L25.93,88 Z" fill="rgb(40,40,40)"/><path d="M47.41,12.8 L47.74,12.8 L27.49,88 L26.56,88 Z" fill="rgb(40,40,40)"/><path d="M47.44,12.8 L47.78,12.8 L28.12,88 L27.19,88 Z" fill="rgb(40,40,40)"/><path d="M47.48,12.8 L47.81,12.8 L28.75,88 L27.82,88 Z" fill="rgb(40,40,40)"/><path d="M47.51,12.8 L47.85,12.8 L29.39,88 L28.45,88 Z" fill="rgb(40,40,40)"/><path d="M47.55,12.8 L47.88,12.8 L30.02,88 L29.09,88 Z" fill="rgb(96,96,96)"/><path d="M47.58,12.8 L47.92,12.8 L30.65,88 L29.72,88 Z" fill="rgb(164,164,164)"/><path d="M47.62,12.8 L47.95,12.8 L31.28,88 L30.35,88 Z" fill="rgb(200,200,200)"/><path d="M47.65,12.8 L47.99,12.8 L31.91,88 L30.98,88 Z" fill="rgb(200,200,200)"/><path d="M47.69,12.8 L48.03,12.8 L32.54,88 L31.61,88 Z" fill="rgb(185,185,185)"/><path d="M47.73,12.8 L48.06,12.8 L33.17,88 L32.24,88 Z" fill="rgb(138,138,138)"/><path d="M47.76,12.8 L48.10,12.8 L33.80,88 L32.87,88 Z" fill="rgb(91,91,91)"/><path d="M47.80,12.8 L48.13,12.8 L34.43,88 L33.50,88 Z" fill="rgb(44,44,44)"/><path d="M47.83,12.8 L48.17,12.8 L35.07,88 L34.13,88 Z" fill="rgb(22,22,22)"/><path d="M47.87,12.8 L48.20,12.8 L35.70,88 L34.77,88 Z" fill="rgb(22,22,22)"/><path d="M47.90,12.8 L48.24,12.8 L36.33,88 L35.40,88 Z" fill="rgb(22,22,22)"/><path d="M47.94,12.8 L48.27,12.8 L36.96,88 L36.03,88 Z" fill="rgb(22,22,22)"/><path d="M47.97,12.8 L48.31,12.8 L37.59,88 L36.66,88 Z" fill="rgb(22,22,22)"/><path d="M48.01,12.8 L48.35,12.8 L38.22,88 L37.29,88 Z" fill="rgb(22,22,22)"/><path d="M48.05,12.8 L48.38,12.8 L38.85,88 L37.92,88 Z" fill="rgb(22,22,22)"/><path d="M48.08,12.8 L48.42,12.8 L39.48,88 L38.55,88 Z" fill="rgb(22,22,22)"/><path d="M48.12,12.8 L48.45,12.8 L40.11,88 L39.18,88 Z" fill="rgb(22,22,22)"/><path d="M48.15,12.8 L48.49,12.8 L40.75,88 L39.81,88 Z" fill="rgb(41,41,41)"/><path d="M48.19,12.8 L48.52,12.8 L41.38,88 L40.45,88 Z" fill="rgb(92,92,92)"/><path d="M48.22,12.8 L48.56,12.8 L42.01,88 L41.08,88 Z" fill="rgb(143,143,143)"/><path d="M48.26,12.8 L48.59,12.8 L42.64,88 L41.71,88 Z" fill="rgb(195,195,195)"/><path d="M48.29,12.8 L48.63,12.8 L43.27,88 L42.34,88 Z" fill="rgb(235,235,235)"/><path d="M48.33,12.8 L48.67,12.8 L43.90,88 L42.97,88 Z" fill="rgb(235,235,235)"/><path d="M48.37,12.8 L48.70,12.8 L44.53,88 L43.60,88 Z" fill="rgb(235,235,235)"/><path d="M48.40,12.8 L48.74,12.8 L45.16,88 L44.23,88 Z" fill="rgb(235,235,235)"/><path d="M48.44,12.8 L48.77,12.8 L45.79,88 L44.86,88 Z" fill="rgb(208,208,208)"/><path d="M48.47,12.8 L48.81,12.8 L46.43,88 L45.49,88 Z" fill="rgb(180,180,180)"/><path d="M48.51,12.8 L48.84,12.8 L47.06,88 L46.13,88 Z" fill="rgb(160,160,160)"/><path d="M48.54,12.8 L48.88,12.8 L47.69,88 L46.76,88 Z" fill="rgb(160,160,160)"/><path d="M48.58,12.8 L48.91,12.8 L48.32,88 L47.39,88 Z" fill="rgb(160,160,160)"/><path d="M48.61,12.8 L48.95,12.8 L48.95,88 L48.02,88 Z" fill="rgb(160,160,160)"/><path d="M48.65,12.8 L48.99,12.8 L49.58,88 L48.65,88 Z" fill="rgb(160,160,160)"/><path d="M48.69,12.8 L49.02,12.8 L50.21,88 L49.28,88 Z" fill="rgb(166,166,166)"/><path d="M48.72,12.8 L49.06,12.8 L50.84,88 L49.91,88 Z" fill="rgb(181,181,181)"/><path d="M48.76,12.8 L49.09,12.8 L51.47,88 L50.54,88 Z" fill="rgb(195,195,195)"/><path d="M48.79,12.8 L49.13,12.8 L52.11,88 L51.17,88 Z" fill="rgb(209,209,209)"/><path d="M48.83,12.8 L49.16,12.8 L52.74,88 L51.81,88 Z" fill="rgb(224,224,224)"/><path d="M48.86,12.8 L49.20,12.8 L53.37,88 L52.44,88 Z" fill="rgb(225,225,225)"/><path d="M48.90,12.8 L49.23,12.8 L54.00,88 L53.07,88 Z" fill="rgb(225,225,225)"/><path d="M48.93,12.8 L49.27,12.8 L54.63,88 L53.70,88 Z" fill="rgb(225,225,225)"/><path d="M48.97,12.8 L49.31,12.8 L55.26,88 L54.33,88 Z" fill="rgb(225,225,225)"/><path d="M49.01,12.8 L49.34,12.8 L55.89,88 L54.96,88 Z" fill="rgb(225,225,225)"/><path d="M49.04,12.8 L49.38,12.8 L56.52,88 L55.59,88 Z" fill="rgb(225,225,225)"/><path d="M49.08,12.8 L49.41,12.8 L57.15,88 L56.22,88 Z" fill="rgb(225,225,225)"/><path d="M49.11,12.8 L49.45,12.8 L57.79,88 L56.85,88 Z" fill="rgb(225,225,225)"/><path d="M49.15,12.8 L49.48,12.8 L58.42,88 L57.49,88 Z" fill="rgb(220,220,220)"/><path d="M49.18,12.8 L49.52,12.8 L59.05,88 L58.12,88 Z" fill="rgb(201,201,201)"/><path d="M49.22,12.8 L49.55,12.8 L59.68,88 L58.75,88 Z" fill="rgb(182,182,182)"/><path d="M49.25,12.8 L49.59,12.8 L60.31,88 L59.38,88 Z" fill="rgb(163,163,163)"/><path d="M49.29,12.8 L49.63,12.8 L60.94,88 L60.01,88 Z" fill="rgb(144,144,144)"/><path d="M49.33,12.8 L49.66,12.8 L61.57,88 L60.64,88 Z" fill="rgb(140,140,140)"/><path d="M49.36,12.8 L49.70,12.8 L62.20,88 L61.27,88 Z" fill="rgb(140,140,140)"/><path d="M49.40,12.8 L49.73,12.8 L62.83,88 L61.90,88 Z" fill="rgb(140,140,140)"/><path d="M49.43,12.8 L49.77,12.8 L63.47,88 L62.53,88 Z" fill="rgb(140,140,140)"/><path d="M49.47,12.8 L49.80,12.8 L64.10,88 L63.17,88 Z" fill="rgb(140,140,140)"/><path d="M49.50,12.8 L49.84,12.8 L64.73,88 L63.80,88 Z" fill="rgb(159,159,159)"/><path d="M49.54,12.8 L49.87,12.8 L65.36,88 L64.43,88 Z" fill="rgb(179,179,179)"/><path d="M49.57,12.8 L49.91,12.8 L65.99,88 L65.06,88 Z" fill="rgb(200,200,200)"/><path d="M49.61,12.8 L49.95,12.8 L66.62,88 L65.69,88 Z" fill="rgb(210,210,210)"/><path d="M49.65,12.8 L49.98,12.8 L67.25,88 L66.32,88 Z" fill="rgb(210,210,210)"/><path d="M49.68,12.8 L50.02,12.8 L67.88,88 L66.95,88 Z" fill="rgb(210,210,210)"/><path d="M49.72,12.8 L50.05,12.8 L68.51,88 L67.58,88 Z" fill="rgb(210,210,210)"/><path d="M49.75,12.8 L50.09,12.8 L69.15,88 L68.21,88 Z" fill="rgb(210,210,210)"/><path d="M49.79,12.8 L50.12,12.8 L69.78,88 L68.85,88 Z" fill="rgb(205,205,205)"/><path d="M49.82,12.8 L50.16,12.8 L70.41,88 L69.48,88 Z" fill="rgb(157,157,157)"/><path d="M49.86,12.8 L50.19,12.8 L71.04,88 L70.11,88 Z" fill="rgb(109,109,109)"/><path d="M49.89,12.8 L50.23,12.8 L71.67,88 L70.74,88 Z" fill="rgb(60,60,60)"/><path d="M49.93,12.8 L50.27,12.8 L72.30,88 L71.37,88 Z" fill="rgb(45,45,45)"/><path d="M49.97,12.8 L50.30,12.8 L72.93,88 L72.00,88 Z" fill="rgb(45,45,45)"/><path d="M50.00,12.8 L50.34,12.8 L73.56,88 L72.63,88 Z" fill="rgb(45,45,45)"/><path d="M50.04,12.8 L50.37,12.8 L74.19,88 L73.26,88 Z" fill="rgb(45,45,45)"/><path d="M50.07,12.8 L50.41,12.8 L74.83,88 L73.89,88 Z" fill="rgb(45,45,45)"/><path d="M50.11,12.8 L50.44,12.8 L75.46,88 L74.53,88 Z" fill="rgb(77,77,77)"/><path d="M50.14,12.8 L50.48,12.8 L76.09,88 L75.16,88 Z" fill="rgb(117,117,117)"/><path d="M50.18,12.8 L50.51,12.8 L76.72,88 L75.79,88 Z" fill="rgb(130,130,130)"/><path d="M50.21,12.8 L50.55,12.8 L77.35,88 L76.42,88 Z" fill="rgb(130,130,130)"/></g><path d="M22,80.5 Q48,83 75,78.5 L75,92 L22,92 Z" fill="#c6c6c6" opacity="0.75"/><path d="M23,85.5 Q48,90 74,82 L74,92 L23,92 Z" fill="#a4a4a4"/></g></g><g transform="translate(551,302)"><clipPath id="cpTc"><path d="M30.5,16.8 L66.8,16.8 L79.3,77.8 A30.6,5.5 0 0 1 18,78.8 Z"/></clipPath><g clip-path="url(#cpTc)"><g filter="url(#fBlur)"><path d="M30.35,16 L31.05,16 L17.86,84 L16.85,84 Z" fill="rgb(200,200,200)"/><path d="M30.75,16 L31.46,16 L18.56,84 L17.56,84 Z" fill="rgb(200,200,200)"/><path d="M31.16,16 L31.86,16 L19.27,84 L18.26,84 Z" fill="rgb(200,200,200)"/><path d="M31.56,16 L32.26,16 L19.97,84 L18.97,84 Z" fill="rgb(200,200,200)"/><path d="M31.96,16 L32.67,16 L20.68,84 L19.67,84 Z" fill="rgb(200,200,200)"/><path d="M32.37,16 L33.07,16 L21.38,84 L20.38,84 Z" fill="rgb(200,200,200)"/><path d="M32.77,16 L33.47,16 L22.09,84 L21.08,84 Z" fill="rgb(200,200,200)"/><path d="M33.17,16 L33.88,16 L22.79,84 L21.79,84 Z" fill="rgb(200,200,200)"/><path d="M33.58,16 L34.28,16 L23.50,84 L22.49,84 Z" fill="rgb(200,200,200)"/><path d="M33.98,16 L34.68,16 L24.21,84 L23.20,84 Z" fill="rgb(194,194,194)"/><path d="M34.38,16 L35.09,16 L24.91,84 L23.91,84 Z" fill="rgb(152,152,152)"/><path d="M34.79,16 L35.49,16 L25.62,84 L24.61,84 Z" fill="rgb(110,110,110)"/><path d="M35.19,16 L35.89,16 L26.32,84 L25.32,84 Z" fill="rgb(67,67,67)"/><path d="M35.59,16 L36.30,16 L27.03,84 L26.02,84 Z" fill="rgb(48,48,48)"/><path d="M36.00,16 L36.70,16 L27.73,84 L26.73,84 Z" fill="rgb(48,48,48)"/><path d="M36.40,16 L37.10,16 L28.44,84 L27.43,84 Z" fill="rgb(48,48,48)"/><path d="M36.80,16 L37.51,16 L29.14,84 L28.14,84 Z" fill="rgb(48,48,48)"/><path d="M37.21,16 L37.91,16 L29.85,84 L28.84,84 Z" fill="rgb(112,112,112)"/><path d="M37.61,16 L38.31,16 L30.56,84 L29.55,84 Z" fill="rgb(196,196,196)"/><path d="M38.01,16 L38.72,16 L31.26,84 L30.26,84 Z" fill="rgb(245,245,245)"/><path d="M38.42,16 L39.12,16 L31.97,84 L30.96,84 Z" fill="rgb(245,245,245)"/><path d="M38.82,16 L39.52,16 L32.67,84 L31.67,84 Z" fill="rgb(245,245,245)"/><path d="M39.22,16 L39.93,16 L33.38,84 L32.37,84 Z" fill="rgb(229,229,229)"/><path d="M39.63,16 L40.33,16 L34.08,84 L33.08,84 Z" fill="rgb(137,137,137)"/><path d="M40.03,16 L40.73,16 L34.79,84 L33.78,84 Z" fill="rgb(64,64,64)"/><path d="M40.43,16 L41.14,16 L35.49,84 L34.49,84 Z" fill="rgb(64,64,64)"/><path d="M40.84,16 L41.54,16 L36.20,84 L35.19,84 Z" fill="rgb(64,64,64)"/><path d="M41.24,16 L41.94,16 L36.91,84 L35.90,84 Z" fill="rgb(98,98,98)"/><path d="M41.64,16 L42.35,16 L37.61,84 L36.61,84 Z" fill="rgb(165,165,165)"/><path d="M42.05,16 L42.75,16 L38.32,84 L37.31,84 Z" fill="rgb(232,232,232)"/><path d="M42.45,16 L43.15,16 L39.02,84 L38.02,84 Z" fill="rgb(245,245,245)"/><path d="M42.85,16 L43.56,16 L39.73,84 L38.72,84 Z" fill="rgb(245,245,245)"/><path d="M43.26,16 L43.96,16 L40.43,84 L39.43,84 Z" fill="rgb(245,245,245)"/><path d="M43.66,16 L44.36,16 L41.14,84 L40.13,84 Z" fill="rgb(245,245,245)"/><path d="M44.06,16 L44.77,16 L41.84,84 L40.84,84 Z" fill="rgb(245,245,245)"/><path d="M44.47,16 L45.17,16 L42.55,84 L41.54,84 Z" fill="rgb(231,231,231)"/><path d="M44.87,16 L45.57,16 L43.26,84 L42.25,84 Z" fill="rgb(196,196,196)"/><path d="M45.27,16 L45.98,16 L43.96,84 L42.96,84 Z" fill="rgb(161,161,161)"/><path d="M45.68,16 L46.38,16 L44.67,84 L43.66,84 Z" fill="rgb(150,150,150)"/><path d="M46.08,16 L46.78,16 L45.37,84 L44.37,84 Z" fill="rgb(150,150,150)"/><path d="M46.48,16 L47.19,16 L46.08,84 L45.07,84 Z" fill="rgb(150,150,150)"/><path d="M46.89,16 L47.59,16 L46.78,84 L45.78,84 Z" fill="rgb(183,183,183)"/><path d="M47.29,16 L47.99,16 L47.49,84 L46.48,84 Z" fill="rgb(215,215,215)"/><path d="M47.69,16 L48.40,16 L48.19,84 L47.19,84 Z" fill="rgb(215,215,215)"/><path d="M48.10,16 L48.80,16 L48.90,84 L47.89,84 Z" fill="rgb(215,215,215)"/><path d="M48.50,16 L49.20,16 L49.61,84 L48.60,84 Z" fill="rgb(215,215,215)"/><path d="M48.90,16 L49.61,16 L50.31,84 L49.31,84 Z" fill="rgb(143,143,143)"/><path d="M49.31,16 L50.01,16 L51.02,84 L50.01,84 Z" fill="rgb(50,50,50)"/><path d="M49.71,16 L50.41,16 L51.72,84 L50.72,84 Z" fill="rgb(48,48,48)"/><path d="M50.11,16 L50.82,16 L52.43,84 L51.42,84 Z" fill="rgb(48,48,48)"/><path d="M50.52,16 L51.22,16 L53.13,84 L52.13,84 Z" fill="rgb(97,97,97)"/><path d="M50.92,16 L51.62,16 L53.84,84 L52.83,84 Z" fill="rgb(156,156,156)"/><path d="M51.32,16 L52.03,16 L54.54,84 L53.54,84 Z" fill="rgb(215,215,215)"/><path d="M51.73,16 L52.43,16 L55.25,84 L54.24,84 Z" fill="rgb(240,240,240)"/><path d="M52.13,16 L52.83,16 L55.96,84 L54.95,84 Z" fill="rgb(240,240,240)"/><path d="M52.53,16 L53.24,16 L56.66,84 L55.66,84 Z" fill="rgb(240,240,240)"/><path d="M52.94,16 L53.64,16 L57.37,84 L56.36,84 Z" fill="rgb(240,240,240)"/><path d="M53.34,16 L54.04,16 L58.07,84 L57.07,84 Z" fill="rgb(240,240,240)"/><path d="M53.74,16 L54.45,16 L58.78,84 L57.77,84 Z" fill="rgb(240,240,240)"/><path d="M54.15,16 L54.85,16 L59.48,84 L58.48,84 Z" fill="rgb(240,240,240)"/><path d="M54.55,16 L55.25,16 L60.19,84 L59.18,84 Z" fill="rgb(239,239,239)"/><path d="M54.95,16 L55.66,16 L60.89,84 L59.89,84 Z" fill="rgb(184,184,184)"/><path d="M55.36,16 L56.06,16 L61.60,84 L60.59,84 Z" fill="rgb(130,130,130)"/><path d="M55.76,16 L56.46,16 L62.31,84 L61.30,84 Z" fill="rgb(75,75,75)"/><path d="M56.16,16 L56.87,16 L63.01,84 L62.01,84 Z" fill="rgb(24,24,24)"/><path d="M56.57,16 L57.27,16 L63.72,84 L62.71,84 Z" fill="rgb(24,24,24)"/><path d="M56.97,16 L57.67,16 L64.42,84 L63.42,84 Z" fill="rgb(24,24,24)"/><path d="M57.37,16 L58.08,16 L65.13,84 L64.12,84 Z" fill="rgb(24,24,24)"/><path d="M57.78,16 L58.48,16 L65.83,84 L64.83,84 Z" fill="rgb(24,24,24)"/><path d="M58.18,16 L58.88,16 L66.54,84 L65.53,84 Z" fill="rgb(59,59,59)"/><path d="M58.58,16 L59.29,16 L67.24,84 L66.24,84 Z" fill="rgb(105,105,105)"/><path d="M58.99,16 L59.69,16 L67.95,84 L66.94,84 Z" fill="rgb(150,150,150)"/><path d="M59.39,16 L60.09,16 L68.66,84 L67.65,84 Z" fill="rgb(150,150,150)"/><path d="M59.79,16 L60.50,16 L69.36,84 L68.36,84 Z" fill="rgb(150,150,150)"/><path d="M60.20,16 L60.90,16 L70.07,84 L69.06,84 Z" fill="rgb(150,150,150)"/><path d="M60.60,16 L61.30,16 L70.77,84 L69.77,84 Z" fill="rgb(155,155,155)"/><path d="M61.00,16 L61.71,16 L71.48,84 L70.47,84 Z" fill="rgb(174,174,174)"/><path d="M61.41,16 L62.11,16 L72.18,84 L71.18,84 Z" fill="rgb(193,193,193)"/><path d="M61.81,16 L62.51,16 L72.89,84 L71.88,84 Z" fill="rgb(195,195,195)"/><path d="M62.21,16 L62.92,16 L73.59,84 L72.59,84 Z" fill="rgb(195,195,195)"/><path d="M62.62,16 L63.32,16 L74.30,84 L73.29,84 Z" fill="rgb(195,195,195)"/><path d="M63.02,16 L63.72,16 L75.01,84 L74.00,84 Z" fill="rgb(177,177,177)"/><path d="M63.42,16 L64.13,16 L75.71,84 L74.71,84 Z" fill="rgb(151,151,151)"/><path d="M63.83,16 L64.53,16 L76.42,84 L75.41,84 Z" fill="rgb(126,126,126)"/><path d="M64.23,16 L64.93,16 L77.12,84 L76.12,84 Z" fill="rgb(125,125,125)"/><path d="M64.63,16 L65.34,16 L77.83,84 L76.82,84 Z" fill="rgb(125,125,125)"/><path d="M65.04,16 L65.74,16 L78.53,84 L77.53,84 Z" fill="rgb(125,125,125)"/><path d="M65.44,16 L66.14,16 L79.24,84 L78.23,84 Z" fill="rgb(125,125,125)"/><path d="M65.84,16 L66.55,16 L79.94,84 L78.94,84 Z" fill="rgb(125,125,125)"/><path d="M66.25,16 L66.95,16 L80.65,84 L79.64,84 Z" fill="rgb(125,125,125)"/></g><ellipse cx="48.6" cy="16.8" rx="18.2" ry="1.4" fill="#4a4a4a"/></g></g><g transform="translate(655,302)"><path d="M16.4,19.3 Q16.4,11.3 24.4,11.3 L73.8,11.3 L73.8,88.6 L16.4,83 Z" fill="#dadada"/><path d="M73.8,11.3 L76,11.5 Q81.6,12 81.6,16 L81.6,85.7 L73.8,88.6 Z" fill="url(#gSide)"/></g><g transform="translate(759,302)"><path d="M19,16.4 L78.6,33.7 L78.6,64.7 L17,77.5 A17,31 0 0 1 19,16.4 Z" fill="url(#gPanelV)"/><ellipse cx="77.9" cy="49.4" rx="5.7" ry="16.2" fill="#e4e4e4"/><ellipse cx="77.6" cy="49.5" rx="4.9" ry="15.2" fill="#8c8c8c" stroke="#707070" stroke-width="0.7"/></g><g transform="translate(239,408)"><path d="M10.3,27.7 L86.2,28.7 L86.2,70.8 L10.3,65.6 A8,19 0 0 1 10.3,27.7 Z" fill="url(#gPanelV)"/><ellipse cx="86.8" cy="49.7" rx="6.6" ry="21.1" fill="#e4e4e4"/><ellipse cx="86.5" cy="49.6" rx="5.8" ry="19.6" fill="#8c8c8c" stroke="#6e6e6e" stroke-width="0.7"/></g><g transform="translate(343,408)"><path d="M15,23 L82.7,23.6 L81.6,75.9 L12.9,70.8 A11,24 0 0 1 15,23 Z" fill="url(#gPanelV)"/><ellipse cx="83.7" cy="49.7" rx="7.6" ry="26.1" fill="#c9c9c9" transform="rotate(-3 83.7 49.7)"/></g><g transform="translate(447,408)"><clipPath id="cpCube"><path d="M5.2,16.9 L64.4,17.4 L64.4,86.5 L5.2,80.3 Z"/></clipPath><g clip-path="url(#cpCube)"><rect x="0" y="10" width="70" height="80" fill="#7e7e7e"/><g filter="url(#fCube)"><ellipse cx="36" cy="24" rx="24" ry="10" fill="#101010"/><ellipse cx="24" cy="38" rx="14" ry="9" fill="#2a2a2a"/><ellipse cx="46" cy="36" rx="9" ry="6" fill="#5a5a5a"/><ellipse cx="10" cy="40" rx="5" ry="16" fill="#5c5c5c"/><ellipse cx="52" cy="52" rx="14" ry="4" fill="#a4a4a4"/><ellipse cx="22" cy="62" rx="16" ry="5" fill="#9a9a9a"/><ellipse cx="40" cy="76" rx="20" ry="5" fill="#7a7a7a"/><ellipse cx="56" cy="24" rx="6" ry="4" fill="#8a8a8a"/></g></g><path d="M64.4,17.4 L88,17.9 L88,75 L64.4,86.5 Z" fill="url(#gCubeS)"/><path d="M70,82 Q80,72 88,60" stroke="#5a5a5a" stroke-width="3" fill="none" opacity="0.4"/><path d="M64.4,17.4 L64.4,86.5" stroke="#f4f4f4" stroke-width="1.6"/><path d="M5.2,16.9 L64.4,17.4 L88,17.9" stroke="#a8a8a8" stroke-width="1" fill="none"/><path d="M5.2,17 L5.2,80.3 L64.4,86.5" stroke="#9a9a9a" stroke-width="0.8" fill="none"/></g><g transform="translate(551,408)"><path d="M21.1,11.9 L76.5,11.3 L76.5,87.2 L59,85.1 L59,24.2 L37.5,24.2 L37.5,83.5 L21.1,82 Z" fill="#dcdcdc"/></g><g transform="translate(655,408)"><path d="M8.2,86.2 L8.2,40 A29.75,28.7 0 0 1 67.7,40 L67.7,91.3 Z" fill="#d9d9d9"/><path d="M38,11.3 Q45,10.5 57,12 Q84,18 85.7,45 L85.7,83 L67.7,91.3 L67.7,40 A29.75,28.7 0 0 0 38,11.3 Z" fill="url(#gSide)"/></g><g transform="translate(759,408)"><path d="M2.7,79 L2.7,50 A33.85,30.5 0 0 1 70.4,50 L70.4,84.1 Z" fill="#d9d9d9"/><path d="M36.5,19.5 L55,19.8 Q82,22 89.8,42 L70.4,50 A33.85,30.5 0 0 0 36.5,19.5 Z" fill="#b9b9b9"/><path d="M70.4,50 L89.8,42 L89.8,75.9 L70.4,84.1 Z" fill="url(#gSide)"/></g><g transform="translate(239,514)"><path d="M16.4,83 L16.4,19 Q16.4,11.3 24,11.3 L66,11.3 Q73.8,11.3 73.8,19 L73.8,88.6 Z" fill="#dadada"/><path d="M66,11.3 Q80,11.5 81,20 L81,86 L73.8,88.6 L73.8,19 Q73.8,11.3 66,11.3 Z" fill="url(#gSide)"/></g><g transform="translate(343,514)"><path d="M3.7,22.2 L66.3,22.6 L66.3,82.5 L3.7,77.5 Z" fill="#d9d9d9"/><path d="M66.3,22.6 L88.8,22.2 L88.8,71.8 L66.3,82.5 Z" fill="url(#gSide)"/></g><g transform="translate(447,514)"><path d="M3.1,30.8 L70.8,31.8 L70.8,71.8 Q60,44 33.8,44.1 Q12,48 3.1,66.7 Z" fill="#dadada"/><path d="M3.1,66.7 Q12,48 33.8,44.1 Q30,50 31,59.5 Z" fill="#b4b4b4"/><path d="M70.8,31.8 L89.8,30.8 L89.8,64.6 L70.8,71.8 Z" fill="url(#gSide)"/></g><g transform="translate(551,514)"><path d="M21.1,11.9 L76.9,11.3 L76.9,87.2 L60.1,85.5 L60.1,35.4 A11.8,11.8 0 0 0 36.5,35.4 L36.5,84 L21.1,83 Z" fill="#dcdcdc"/></g><g transform="translate(655,514)"><path d="M48.2,16.4 L60,18.5 L71,25 L78.3,36 L80,48.2 L78.3,60.5 L71,71.5 L60,78 L48.2,80 L36.4,78 L25.4,71.5 L18.1,60.5 L16.4,48.2 L18.1,36 L25.4,25 L36.4,18.5 Z" fill="url(#gSph)"/></g><g transform="translate(759,514)"><path d="M16,25.6 L80.2,25.6 L69.3,70.8 A20.5,3.6 0 0 1 28.3,70.8 Z" fill="url(#gH)"/><path d="M16,25.6 L80.2,25.6" stroke="#eaeaea" stroke-width="1"/></g><g transform="translate(239,620)"><path d="M16.4,31.8 L80,31.8 L80,64.6 A31.8,4.2 0 0 1 16.4,64.6 Z" fill="url(#gH)"/></g><g transform="translate(343,620)"><path d="M16.6,25 L79.6,25 L64.2,71.8 A15.9,2.6 0 0 1 32.4,71.8 Z" fill="url(#gH)"/></g><g transform="translate(447,620)"><path d="M16.4,24.6 L80,24.6 L80,72.8 A31.8,4.8 0 0 1 16.4,72.8 Z" fill="url(#gH)"/></g><g transform="translate(551,620)"><path d="M32.4,24.6 L64.2,24.6 L79.6,72.8 A31.3,4.8 0 0 1 17,72.8 Z" fill="url(#gH)"/></g><g transform="translate(655,620)"><clipPath id="cpCy"><path d="M18,17 Q18,11.7 48,11.7 Q78.1,11.7 78.1,17 L78.1,85 A30.05,4.2 0 0 1 18,85 Z"/></clipPath><g clip-path="url(#cpCy)"><g filter="url(#fBlur)"><path d="M17.85,10 L18.82,10 L18.82,90 L17.85,90 Z" fill="rgb(140,140,140)"/><path d="M18.52,10 L19.49,10 L19.49,90 L18.52,90 Z" fill="rgb(140,140,140)"/><path d="M19.19,10 L20.15,10 L20.15,90 L19.19,90 Z" fill="rgb(140,140,140)"/><path d="M19.85,10 L20.82,10 L20.82,90 L19.85,90 Z" fill="rgb(140,140,140)"/><path d="M20.52,10 L21.49,10 L21.49,90 L20.52,90 Z" fill="rgb(172,172,172)"/><path d="M21.19,10 L22.16,10 L22.16,90 L21.19,90 Z" fill="rgb(205,205,205)"/><path d="M21.86,10 L22.82,10 L22.82,90 L21.86,90 Z" fill="rgb(205,205,205)"/><path d="M22.52,10 L23.49,10 L23.49,90 L22.52,90 Z" fill="rgb(205,205,205)"/><path d="M23.19,10 L24.16,10 L24.16,90 L23.19,90 Z" fill="rgb(170,170,170)"/><path d="M23.86,10 L24.83,10 L24.83,90 L23.86,90 Z" fill="rgb(83,83,83)"/><path d="M24.53,10 L25.50,10 L25.50,90 L24.53,90 Z" fill="rgb(64,64,64)"/><path d="M25.20,10 L26.16,10 L26.16,90 L25.20,90 Z" fill="rgb(64,64,64)"/><path d="M25.86,10 L26.83,10 L26.83,90 L25.86,90 Z" fill="rgb(107,107,107)"/><path d="M26.53,10 L27.50,10 L27.50,90 L26.53,90 Z" fill="rgb(175,175,175)"/><path d="M27.20,10 L28.17,10 L28.17,90 L27.20,90 Z" fill="rgb(200,200,200)"/><path d="M27.87,10 L28.83,10 L28.83,90 L27.87,90 Z" fill="rgb(200,200,200)"/><path d="M28.53,10 L29.50,10 L29.50,90 L28.53,90 Z" fill="rgb(200,200,200)"/><path d="M29.20,10 L30.17,10 L30.17,90 L29.20,90 Z" fill="rgb(200,200,200)"/><path d="M29.87,10 L30.84,10 L30.84,90 L29.87,90 Z" fill="rgb(152,152,152)"/><path d="M30.54,10 L31.51,10 L31.51,90 L30.54,90 Z" fill="rgb(95,95,95)"/><path d="M31.21,10 L32.17,10 L32.17,90 L31.21,90 Z" fill="rgb(48,48,48)"/><path d="M31.87,10 L32.84,10 L32.84,90 L31.87,90 Z" fill="rgb(48,48,48)"/><path d="M32.54,10 L33.51,10 L33.51,90 L32.54,90 Z" fill="rgb(48,48,48)"/><path d="M33.21,10 L34.18,10 L34.18,90 L33.21,90 Z" fill="rgb(48,48,48)"/><path d="M33.88,10 L34.84,10 L34.84,90 L33.88,90 Z" fill="rgb(48,48,48)"/><path d="M34.54,10 L35.51,10 L35.51,90 L34.54,90 Z" fill="rgb(78,78,78)"/><path d="M35.21,10 L36.18,10 L36.18,90 L35.21,90 Z" fill="rgb(114,114,114)"/><path d="M35.88,10 L36.85,10 L36.85,90 L35.88,90 Z" fill="rgb(150,150,150)"/><path d="M36.55,10 L37.52,10 L37.52,90 L36.55,90 Z" fill="rgb(185,185,185)"/><path d="M37.22,10 L38.18,10 L38.18,90 L37.22,90 Z" fill="rgb(221,221,221)"/><path d="M37.88,10 L38.85,10 L38.85,90 L37.88,90 Z" fill="rgb(222,222,222)"/><path d="M38.55,10 L39.52,10 L39.52,90 L38.55,90 Z" fill="rgb(222,222,222)"/><path d="M39.22,10 L40.19,10 L40.19,90 L39.22,90 Z" fill="rgb(222,222,222)"/><path d="M39.89,10 L40.85,10 L40.85,90 L39.89,90 Z" fill="rgb(222,222,222)"/><path d="M40.55,10 L41.52,10 L41.52,90 L40.55,90 Z" fill="rgb(222,222,222)"/><path d="M41.22,10 L42.19,10 L42.19,90 L41.22,90 Z" fill="rgb(222,222,222)"/><path d="M41.89,10 L42.86,10 L42.86,90 L41.89,90 Z" fill="rgb(222,222,222)"/><path d="M42.56,10 L43.53,10 L43.53,90 L42.56,90 Z" fill="rgb(222,222,222)"/><path d="M43.23,10 L44.19,10 L44.19,90 L43.23,90 Z" fill="rgb(222,222,222)"/><path d="M43.89,10 L44.86,10 L44.86,90 L43.89,90 Z" fill="rgb(222,222,222)"/><path d="M44.56,10 L45.53,10 L45.53,90 L44.56,90 Z" fill="rgb(224,224,224)"/><path d="M45.23,10 L46.20,10 L46.20,90 L45.23,90 Z" fill="rgb(227,227,227)"/><path d="M45.90,10 L46.86,10 L46.86,90 L45.90,90 Z" fill="rgb(229,229,229)"/><path d="M46.56,10 L47.53,10 L47.53,90 L46.56,90 Z" fill="rgb(232,232,232)"/><path d="M47.23,10 L48.20,10 L48.20,90 L47.23,90 Z" fill="rgb(235,235,235)"/><path d="M47.90,10 L48.87,10 L48.87,90 L47.90,90 Z" fill="rgb(238,238,238)"/><path d="M48.57,10 L49.54,10 L49.54,90 L48.57,90 Z" fill="rgb(240,240,240)"/><path d="M49.24,10 L50.20,10 L50.20,90 L49.24,90 Z" fill="rgb(243,243,243)"/><path d="M49.90,10 L50.87,10 L50.87,90 L49.90,90 Z" fill="rgb(244,244,244)"/><path d="M50.57,10 L51.54,10 L51.54,90 L50.57,90 Z" fill="rgb(244,244,244)"/><path d="M51.24,10 L52.21,10 L52.21,90 L51.24,90 Z" fill="rgb(244,244,244)"/><path d="M51.91,10 L52.87,10 L52.87,90 L51.91,90 Z" fill="rgb(244,244,244)"/><path d="M52.57,10 L53.54,10 L53.54,90 L52.57,90 Z" fill="rgb(244,244,244)"/><path d="M53.24,10 L54.21,10 L54.21,90 L53.24,90 Z" fill="rgb(244,244,244)"/><path d="M53.91,10 L54.88,10 L54.88,90 L53.91,90 Z" fill="rgb(244,244,244)"/><path d="M54.58,10 L55.55,10 L55.55,90 L54.58,90 Z" fill="rgb(244,244,244)"/><path d="M55.25,10 L56.21,10 L56.21,90 L55.25,90 Z" fill="rgb(244,244,244)"/><path d="M55.91,10 L56.88,10 L56.88,90 L55.91,90 Z" fill="rgb(244,244,244)"/><path d="M56.58,10 L57.55,10 L57.55,90 L56.58,90 Z" fill="rgb(244,244,244)"/><path d="M57.25,10 L58.22,10 L58.22,90 L57.25,90 Z" fill="rgb(244,244,244)"/><path d="M57.92,10 L58.88,10 L58.88,90 L57.92,90 Z" fill="rgb(244,244,244)"/><path d="M58.58,10 L59.55,10 L59.55,90 L58.58,90 Z" fill="rgb(244,244,244)"/><path d="M59.25,10 L60.22,10 L60.22,90 L59.25,90 Z" fill="rgb(235,235,235)"/><path d="M59.92,10 L60.89,10 L60.89,90 L59.92,90 Z" fill="rgb(220,220,220)"/><path d="M60.59,10 L61.56,10 L61.56,90 L60.59,90 Z" fill="rgb(205,205,205)"/><path d="M61.26,10 L62.22,10 L62.22,90 L61.26,90 Z" fill="rgb(190,190,190)"/><path d="M61.92,10 L62.89,10 L62.89,90 L61.92,90 Z" fill="rgb(175,175,175)"/><path d="M62.59,10 L63.56,10 L63.56,90 L62.59,90 Z" fill="rgb(160,160,160)"/><path d="M63.26,10 L64.23,10 L64.23,90 L63.26,90 Z" fill="rgb(160,160,160)"/><path d="M63.93,10 L64.89,10 L64.89,90 L63.93,90 Z" fill="rgb(160,160,160)"/><path d="M64.59,10 L65.56,10 L65.56,90 L64.59,90 Z" fill="rgb(149,149,149)"/><path d="M65.26,10 L66.23,10 L66.23,90 L65.26,90 Z" fill="rgb(110,110,110)"/><path d="M65.93,10 L66.90,10 L66.90,90 L65.93,90 Z" fill="rgb(72,72,72)"/><path d="M66.60,10 L67.57,10 L67.57,90 L66.60,90 Z" fill="rgb(64,64,64)"/><path d="M67.27,10 L68.23,10 L68.23,90 L67.27,90 Z" fill="rgb(64,64,64)"/><path d="M67.93,10 L68.90,10 L68.90,90 L67.93,90 Z" fill="rgb(64,64,64)"/><path d="M68.60,10 L69.57,10 L69.57,90 L68.60,90 Z" fill="rgb(64,64,64)"/><path d="M69.27,10 L70.24,10 L70.24,90 L69.27,90 Z" fill="rgb(64,64,64)"/><path d="M69.94,10 L70.90,10 L70.90,90 L69.94,90 Z" fill="rgb(107,107,107)"/><path d="M70.60,10 L71.57,10 L71.57,90 L70.60,90 Z" fill="rgb(154,154,154)"/><path d="M71.27,10 L72.24,10 L72.24,90 L71.27,90 Z" fill="rgb(190,190,190)"/><path d="M71.94,10 L72.91,10 L72.91,90 L71.94,90 Z" fill="rgb(190,190,190)"/><path d="M72.61,10 L73.58,10 L73.58,90 L72.61,90 Z" fill="rgb(190,190,190)"/><path d="M73.28,10 L74.24,10 L74.24,90 L73.28,90 Z" fill="rgb(190,190,190)"/><path d="M73.94,10 L74.91,10 L74.91,90 L73.94,90 Z" fill="rgb(140,140,140)"/><path d="M74.61,10 L75.58,10 L75.58,90 L74.61,90 Z" fill="rgb(89,89,89)"/><path d="M75.28,10 L76.25,10 L76.25,90 L75.28,90 Z" fill="rgb(80,80,80)"/><path d="M75.95,10 L76.91,10 L76.91,90 L75.95,90 Z" fill="rgb(80,80,80)"/><path d="M76.61,10 L77.58,10 L77.58,90 L76.61,90 Z" fill="rgb(80,80,80)"/><path d="M77.28,10 L78.25,10 L78.25,90 L77.28,90 Z" fill="rgb(80,80,80)"/></g><path d="M19,15.5 Q48,8 77,15.5 Q60,12.5 48,13.5 Q30,12 19,15.5 Z" fill="#303030"/><path d="M22,14.5 Q26,19 34,16 Q48,14 62,15.5 Q72,13 76,15" stroke="#1e1e1e" stroke-width="1" fill="none"/></g></g><g transform="translate(759,620)"><path d="M33,10.8 Q48,10.8 62,12.5 Q76,14.5 80.8,17.4 L53.3,18 Q48,12 33,10.8 Z" fill="#acacac"/><path d="M53.3,18 L80.8,17.4 L80.8,73.6 L53.3,85.6 Z" fill="url(#gSide)"/><path d="M10.2,17.4 Q20,10.8 30,10.8 Q45,10.8 53.3,18 L53.3,85.6 Q45,91 33,91 Q18,90 10.2,82.6 Z" fill="#dadada"/></g><g transform="translate(239,726)"><path d="M6.8,27.7 L92.9,27.7 L92.9,70 L6.8,70 Z" fill="url(#gH)"/><rect x="82" y="27.7" width="10.9" height="45" fill="url(#gSideR)"/></g><g transform="translate(343,726)"><path d="M16,23.2 L86.8,23.2 L86.8,70 L16,70 Z" fill="url(#gH)"/></g><g transform="translate(447,726)"><path d="M21.2,10.9 L86.5,10.9 L86.5,70 L21.2,70 Z" fill="url(#gH)"/><rect x="72" y="10.9" width="14.5" height="60" fill="#bdbdbd"/></g><g transform="translate(551,726)"><path d="M15.4,10.9 L88.3,10.9 L88.3,70 L15.4,70 Z" fill="url(#gH)"/><rect x="73.8" y="10.9" width="14.5" height="60" fill="#bdbdbd"/></g><g transform="translate(655,726)"><path d="M14,35.6 L75,34.6 Q83,35 83,42 L83,70 L6.8,70 Q5.5,42 14,35.6 Z" fill="#d9d9d9"/><path d="M63,35.2 Q56,44 56.5,70 L83,70 L83,42 Q83,35 75,34.6 Z" fill="#c6c6c6"/></g><g transform="translate(759,726)"><path d="M6,42 L86,40.8 Q91,41 91.5,45 Q92,50 86,53.5 Q80,57 70,56.6 L8,54.8 Q2.2,53.5 2.2,48.5 Q2.2,42.5 6,42 Z" fill="#d6d6d6"/><path d="M6,42 L86,40.8 Q91,41 91.5,45 Q85,46.5 70,46.2 L8,45.6 Q3,45 3.5,44 Q4,42.2 6,42 Z" fill="#c2c2c2"/><path d="M2.5,50 Q4,54 8,54.8 L70,56.6 Q80,57 86,53.5 Q80,55 70,55 L8,53.2 Q4,52.5 2.5,50 Z" fill="#b8b8b8"/></g><rect x="238" y="89" width="97" height="97" fill="none" stroke="#ffffff" stroke-width="4"/><rect x="550" y="89" width="27" height="14" fill="#ffff00"/><text x="553.5" y="99.8" font-family="Liberation Sans" font-size="11" fill="#ff0000">Neu</text><rect x="654" y="89" width="27" height="14" fill="#ffff00"/><text x="657.5" y="99.8" font-family="Liberation Sans" font-size="11" fill="#ff0000">Neu</text><rect x="758" y="89" width="27" height="14" fill="#ffff00"/><text x="761.5" y="99.8" font-family="Liberation Sans" font-size="11" fill="#ff0000">Neu</text></svg>
<svg class="a" style="left:9px;top:136px" width="216" height="193" viewBox="0 0 216 193"><path d="M66.9,24.8 L151,60.1 L150.3,172 L67.8,163.6 Z" fill="#dcdcdc"/><path d="M149,59.6 L151.3,60.4 L150.6,172 L148.4,171.8 Z" fill="#bdbdbd"/></svg>
<!-- /GRIDSVG -->

</body></html>
